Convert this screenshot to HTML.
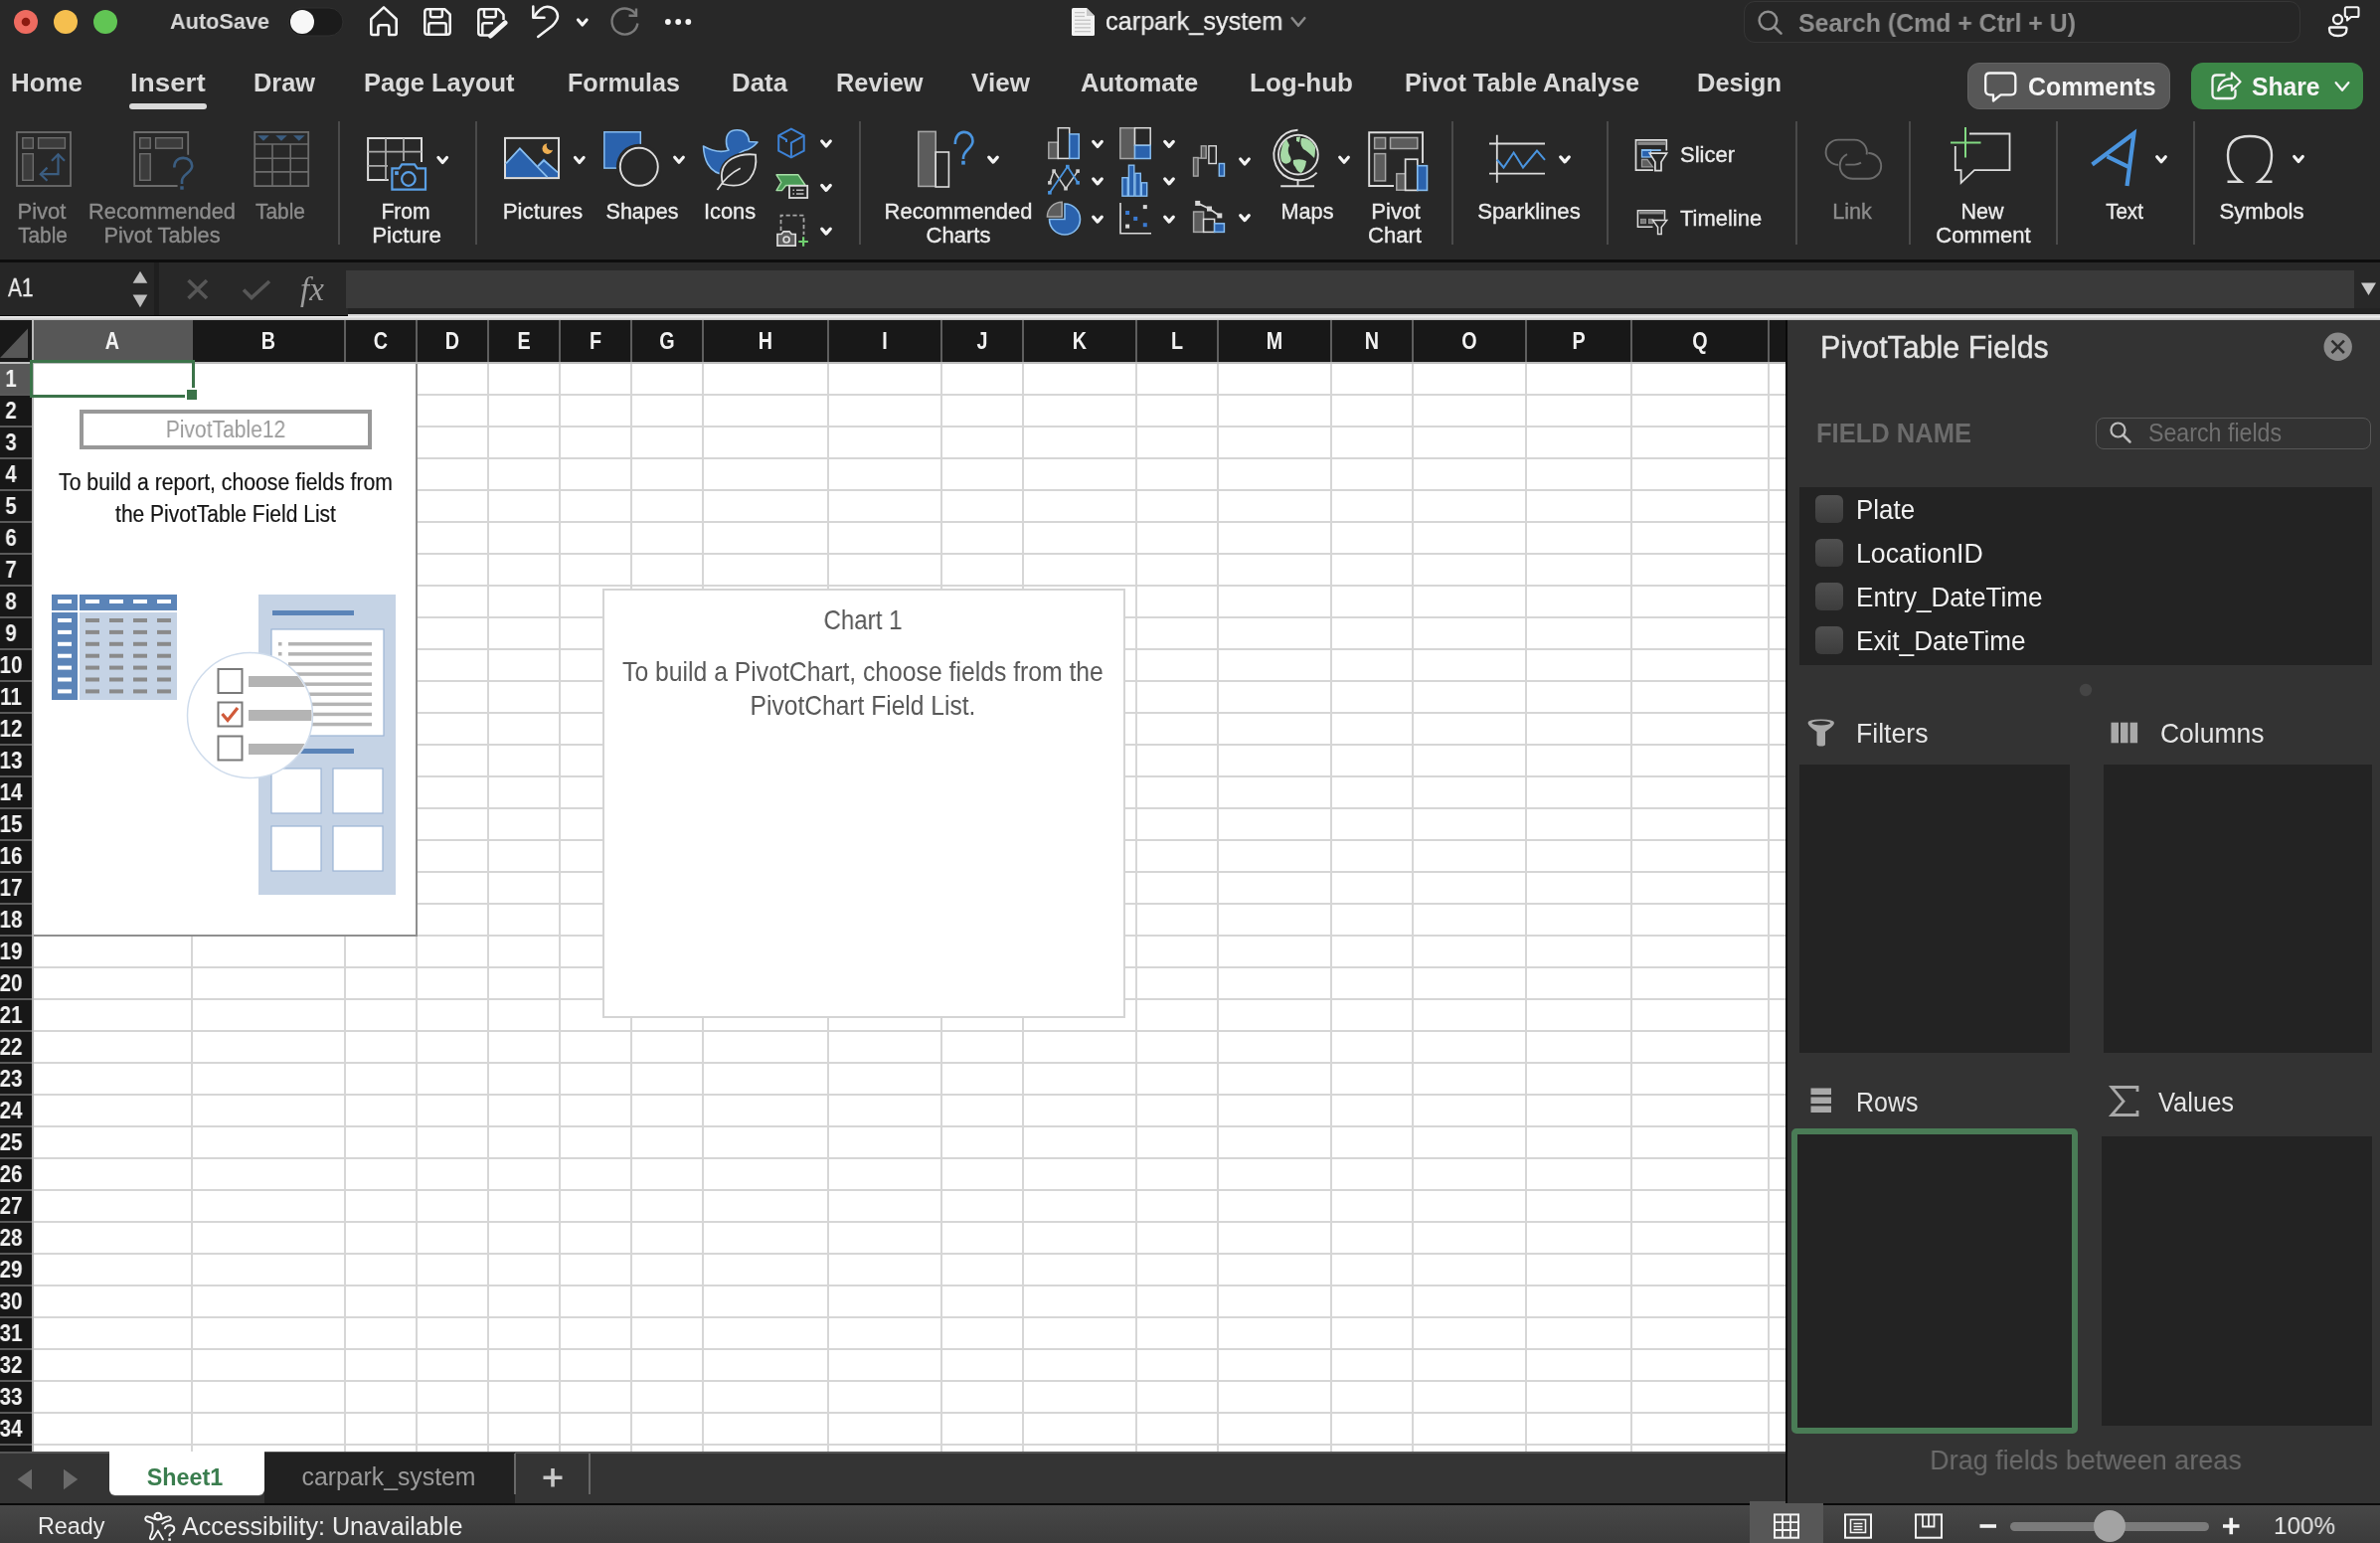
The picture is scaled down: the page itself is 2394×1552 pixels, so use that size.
<!DOCTYPE html>
<html><head><meta charset="utf-8"><title>Excel</title>
<style>html,body{margin:0;padding:0;}body{width:2394px;height:1552px;position:relative;overflow:hidden;background:#282828;font-family:"Liberation Sans",sans-serif;}</style>
</head><body><div style="position:absolute;left:0;top:0;width:2394px;height:1552px;will-change:transform;">
<div style="position:absolute;left:0px;top:0px;width:2394px;height:261px;background:#282828"></div><div style="position:absolute;left:0px;top:261px;width:2394px;height:3px;background:#0e0e0e"></div><div style="position:absolute;left:0px;top:264px;width:2394px;height:53px;background:#282828"></div><div style="position:absolute;left:0px;top:264px;width:155px;height:53px;background:#262626"></div><div style="position:absolute;left:155px;top:264px;width:5px;height:53px;background:#1f1f1f"></div><div style="position:absolute;left:348px;top:272px;width:2020px;height:38px;background:#3a3a3a"></div><div style="position:absolute;left:350px;top:310px;width:2044px;height:6px;background:#232323"></div><div style="position:absolute;left:0px;top:316.5px;width:350px;height:1.5px;background:#0a0a0a"></div><div style="position:absolute;left:350px;top:316px;width:2044px;height:2px;background:#d9d9d9"></div><div style="position:absolute;left:0px;top:318px;width:2394px;height:4px;background:linear-gradient(#f4f4f4,#c2c2c2)"></div><div style="position:absolute;left:0px;top:322px;width:1796px;height:42px;background:#181818"></div><div style="position:absolute;left:34px;top:322px;width:160px;height:42px;background:#575757"></div><div style="position:absolute;left:0px;top:364px;width:1796px;height:2px;background:#bdbdbd"></div><div style="position:absolute;left:0px;top:366px;width:32px;height:1094px;background:#171717"></div><div style="position:absolute;left:0px;top:366px;width:32px;height:30px;background:#575757"></div><div style="position:absolute;left:32px;top:322px;width:2px;height:1138px;background:#b8b8b8"></div><div style="position:absolute;left:34px;top:366px;width:1762px;height:1094px;background:#ffffff"></div><div style="position:absolute;left:34px;top:396px;width:1762px;height:2px;background:#d6d6d6"></div><div style="position:absolute;left:0px;top:396px;width:32px;height:2px;background:#5a5a5a"></div><div style="position:absolute;left:34px;top:428px;width:1762px;height:2px;background:#d6d6d6"></div><div style="position:absolute;left:0px;top:428px;width:32px;height:2px;background:#5a5a5a"></div><div style="position:absolute;left:34px;top:460px;width:1762px;height:2px;background:#d6d6d6"></div><div style="position:absolute;left:0px;top:460px;width:32px;height:2px;background:#5a5a5a"></div><div style="position:absolute;left:34px;top:492px;width:1762px;height:2px;background:#d6d6d6"></div><div style="position:absolute;left:0px;top:492px;width:32px;height:2px;background:#5a5a5a"></div><div style="position:absolute;left:34px;top:524px;width:1762px;height:2px;background:#d6d6d6"></div><div style="position:absolute;left:0px;top:524px;width:32px;height:2px;background:#5a5a5a"></div><div style="position:absolute;left:34px;top:556px;width:1762px;height:2px;background:#d6d6d6"></div><div style="position:absolute;left:0px;top:556px;width:32px;height:2px;background:#5a5a5a"></div><div style="position:absolute;left:34px;top:588px;width:1762px;height:2px;background:#d6d6d6"></div><div style="position:absolute;left:0px;top:588px;width:32px;height:2px;background:#5a5a5a"></div><div style="position:absolute;left:34px;top:620px;width:1762px;height:2px;background:#d6d6d6"></div><div style="position:absolute;left:0px;top:620px;width:32px;height:2px;background:#5a5a5a"></div><div style="position:absolute;left:34px;top:652px;width:1762px;height:2px;background:#d6d6d6"></div><div style="position:absolute;left:0px;top:652px;width:32px;height:2px;background:#5a5a5a"></div><div style="position:absolute;left:34px;top:684px;width:1762px;height:2px;background:#d6d6d6"></div><div style="position:absolute;left:0px;top:684px;width:32px;height:2px;background:#5a5a5a"></div><div style="position:absolute;left:34px;top:716px;width:1762px;height:2px;background:#d6d6d6"></div><div style="position:absolute;left:0px;top:716px;width:32px;height:2px;background:#5a5a5a"></div><div style="position:absolute;left:34px;top:748px;width:1762px;height:2px;background:#d6d6d6"></div><div style="position:absolute;left:0px;top:748px;width:32px;height:2px;background:#5a5a5a"></div><div style="position:absolute;left:34px;top:780px;width:1762px;height:2px;background:#d6d6d6"></div><div style="position:absolute;left:0px;top:780px;width:32px;height:2px;background:#5a5a5a"></div><div style="position:absolute;left:34px;top:812px;width:1762px;height:2px;background:#d6d6d6"></div><div style="position:absolute;left:0px;top:812px;width:32px;height:2px;background:#5a5a5a"></div><div style="position:absolute;left:34px;top:844px;width:1762px;height:2px;background:#d6d6d6"></div><div style="position:absolute;left:0px;top:844px;width:32px;height:2px;background:#5a5a5a"></div><div style="position:absolute;left:34px;top:876px;width:1762px;height:2px;background:#d6d6d6"></div><div style="position:absolute;left:0px;top:876px;width:32px;height:2px;background:#5a5a5a"></div><div style="position:absolute;left:34px;top:908px;width:1762px;height:2px;background:#d6d6d6"></div><div style="position:absolute;left:0px;top:908px;width:32px;height:2px;background:#5a5a5a"></div><div style="position:absolute;left:34px;top:940px;width:1762px;height:2px;background:#d6d6d6"></div><div style="position:absolute;left:0px;top:940px;width:32px;height:2px;background:#5a5a5a"></div><div style="position:absolute;left:34px;top:972px;width:1762px;height:2px;background:#d6d6d6"></div><div style="position:absolute;left:0px;top:972px;width:32px;height:2px;background:#5a5a5a"></div><div style="position:absolute;left:34px;top:1004px;width:1762px;height:2px;background:#d6d6d6"></div><div style="position:absolute;left:0px;top:1004px;width:32px;height:2px;background:#5a5a5a"></div><div style="position:absolute;left:34px;top:1036px;width:1762px;height:2px;background:#d6d6d6"></div><div style="position:absolute;left:0px;top:1036px;width:32px;height:2px;background:#5a5a5a"></div><div style="position:absolute;left:34px;top:1068px;width:1762px;height:2px;background:#d6d6d6"></div><div style="position:absolute;left:0px;top:1068px;width:32px;height:2px;background:#5a5a5a"></div><div style="position:absolute;left:34px;top:1100px;width:1762px;height:2px;background:#d6d6d6"></div><div style="position:absolute;left:0px;top:1100px;width:32px;height:2px;background:#5a5a5a"></div><div style="position:absolute;left:34px;top:1132px;width:1762px;height:2px;background:#d6d6d6"></div><div style="position:absolute;left:0px;top:1132px;width:32px;height:2px;background:#5a5a5a"></div><div style="position:absolute;left:34px;top:1164px;width:1762px;height:2px;background:#d6d6d6"></div><div style="position:absolute;left:0px;top:1164px;width:32px;height:2px;background:#5a5a5a"></div><div style="position:absolute;left:34px;top:1196px;width:1762px;height:2px;background:#d6d6d6"></div><div style="position:absolute;left:0px;top:1196px;width:32px;height:2px;background:#5a5a5a"></div><div style="position:absolute;left:34px;top:1228px;width:1762px;height:2px;background:#d6d6d6"></div><div style="position:absolute;left:0px;top:1228px;width:32px;height:2px;background:#5a5a5a"></div><div style="position:absolute;left:34px;top:1260px;width:1762px;height:2px;background:#d6d6d6"></div><div style="position:absolute;left:0px;top:1260px;width:32px;height:2px;background:#5a5a5a"></div><div style="position:absolute;left:34px;top:1292px;width:1762px;height:2px;background:#d6d6d6"></div><div style="position:absolute;left:0px;top:1292px;width:32px;height:2px;background:#5a5a5a"></div><div style="position:absolute;left:34px;top:1324px;width:1762px;height:2px;background:#d6d6d6"></div><div style="position:absolute;left:0px;top:1324px;width:32px;height:2px;background:#5a5a5a"></div><div style="position:absolute;left:34px;top:1356px;width:1762px;height:2px;background:#d6d6d6"></div><div style="position:absolute;left:0px;top:1356px;width:32px;height:2px;background:#5a5a5a"></div><div style="position:absolute;left:34px;top:1388px;width:1762px;height:2px;background:#d6d6d6"></div><div style="position:absolute;left:0px;top:1388px;width:32px;height:2px;background:#5a5a5a"></div><div style="position:absolute;left:34px;top:1420px;width:1762px;height:2px;background:#d6d6d6"></div><div style="position:absolute;left:0px;top:1420px;width:32px;height:2px;background:#5a5a5a"></div><div style="position:absolute;left:34px;top:1452px;width:1762px;height:2px;background:#d6d6d6"></div><div style="position:absolute;left:0px;top:1452px;width:32px;height:2px;background:#5a5a5a"></div><div style="position:absolute;left:192px;top:366px;width:2px;height:1094px;background:#d6d6d6"></div><div style="position:absolute;left:346px;top:366px;width:2px;height:1094px;background:#d6d6d6"></div><div style="position:absolute;left:346px;top:322px;width:2px;height:42px;background:#5e5e5e"></div><div style="position:absolute;left:418px;top:366px;width:2px;height:1094px;background:#d6d6d6"></div><div style="position:absolute;left:418px;top:322px;width:2px;height:42px;background:#5e5e5e"></div><div style="position:absolute;left:490px;top:366px;width:2px;height:1094px;background:#d6d6d6"></div><div style="position:absolute;left:490px;top:322px;width:2px;height:42px;background:#5e5e5e"></div><div style="position:absolute;left:562px;top:366px;width:2px;height:1094px;background:#d6d6d6"></div><div style="position:absolute;left:562px;top:322px;width:2px;height:42px;background:#5e5e5e"></div><div style="position:absolute;left:634px;top:366px;width:2px;height:1094px;background:#d6d6d6"></div><div style="position:absolute;left:634px;top:322px;width:2px;height:42px;background:#5e5e5e"></div><div style="position:absolute;left:706px;top:366px;width:2px;height:1094px;background:#d6d6d6"></div><div style="position:absolute;left:706px;top:322px;width:2px;height:42px;background:#5e5e5e"></div><div style="position:absolute;left:832px;top:366px;width:2px;height:1094px;background:#d6d6d6"></div><div style="position:absolute;left:832px;top:322px;width:2px;height:42px;background:#5e5e5e"></div><div style="position:absolute;left:946px;top:366px;width:2px;height:1094px;background:#d6d6d6"></div><div style="position:absolute;left:946px;top:322px;width:2px;height:42px;background:#5e5e5e"></div><div style="position:absolute;left:1028px;top:366px;width:2px;height:1094px;background:#d6d6d6"></div><div style="position:absolute;left:1028px;top:322px;width:2px;height:42px;background:#5e5e5e"></div><div style="position:absolute;left:1142px;top:366px;width:2px;height:1094px;background:#d6d6d6"></div><div style="position:absolute;left:1142px;top:322px;width:2px;height:42px;background:#5e5e5e"></div><div style="position:absolute;left:1224px;top:366px;width:2px;height:1094px;background:#d6d6d6"></div><div style="position:absolute;left:1224px;top:322px;width:2px;height:42px;background:#5e5e5e"></div><div style="position:absolute;left:1338px;top:366px;width:2px;height:1094px;background:#d6d6d6"></div><div style="position:absolute;left:1338px;top:322px;width:2px;height:42px;background:#5e5e5e"></div><div style="position:absolute;left:1420px;top:366px;width:2px;height:1094px;background:#d6d6d6"></div><div style="position:absolute;left:1420px;top:322px;width:2px;height:42px;background:#5e5e5e"></div><div style="position:absolute;left:1534px;top:366px;width:2px;height:1094px;background:#d6d6d6"></div><div style="position:absolute;left:1534px;top:322px;width:2px;height:42px;background:#5e5e5e"></div><div style="position:absolute;left:1640px;top:366px;width:2px;height:1094px;background:#d6d6d6"></div><div style="position:absolute;left:1640px;top:322px;width:2px;height:42px;background:#5e5e5e"></div><div style="position:absolute;left:1778px;top:366px;width:2px;height:1094px;background:#d6d6d6"></div><div style="position:absolute;left:1778px;top:322px;width:2px;height:42px;background:#5e5e5e"></div><div style="position:absolute;left:-887.0px;width:2000px;text-align:center;top:332.41px;font-size:23.5px;line-height:23.5px;color:#f2f2f2;font-weight:700;white-space:nowrap;font-family:'Liberation Sans', sans-serif;transform:scaleX(0.84);transform-origin:50% 0;">A</div><div style="position:absolute;left:-730.0px;width:2000px;text-align:center;top:332.41px;font-size:23.5px;line-height:23.5px;color:#f2f2f2;font-weight:700;white-space:nowrap;font-family:'Liberation Sans', sans-serif;transform:scaleX(0.84);transform-origin:50% 0;">B</div><div style="position:absolute;left:-617.0px;width:2000px;text-align:center;top:332.41px;font-size:23.5px;line-height:23.5px;color:#f2f2f2;font-weight:700;white-space:nowrap;font-family:'Liberation Sans', sans-serif;transform:scaleX(0.84);transform-origin:50% 0;">C</div><div style="position:absolute;left:-545.0px;width:2000px;text-align:center;top:332.41px;font-size:23.5px;line-height:23.5px;color:#f2f2f2;font-weight:700;white-space:nowrap;font-family:'Liberation Sans', sans-serif;transform:scaleX(0.84);transform-origin:50% 0;">D</div><div style="position:absolute;left:-473.0px;width:2000px;text-align:center;top:332.41px;font-size:23.5px;line-height:23.5px;color:#f2f2f2;font-weight:700;white-space:nowrap;font-family:'Liberation Sans', sans-serif;transform:scaleX(0.84);transform-origin:50% 0;">E</div><div style="position:absolute;left:-401.0px;width:2000px;text-align:center;top:332.41px;font-size:23.5px;line-height:23.5px;color:#f2f2f2;font-weight:700;white-space:nowrap;font-family:'Liberation Sans', sans-serif;transform:scaleX(0.84);transform-origin:50% 0;">F</div><div style="position:absolute;left:-329.0px;width:2000px;text-align:center;top:332.41px;font-size:23.5px;line-height:23.5px;color:#f2f2f2;font-weight:700;white-space:nowrap;font-family:'Liberation Sans', sans-serif;transform:scaleX(0.84);transform-origin:50% 0;">G</div><div style="position:absolute;left:-230.0px;width:2000px;text-align:center;top:332.41px;font-size:23.5px;line-height:23.5px;color:#f2f2f2;font-weight:700;white-space:nowrap;font-family:'Liberation Sans', sans-serif;transform:scaleX(0.84);transform-origin:50% 0;">H</div><div style="position:absolute;left:-110.0px;width:2000px;text-align:center;top:332.41px;font-size:23.5px;line-height:23.5px;color:#f2f2f2;font-weight:700;white-space:nowrap;font-family:'Liberation Sans', sans-serif;transform:scaleX(0.84);transform-origin:50% 0;">I</div><div style="position:absolute;left:-12.0px;width:2000px;text-align:center;top:332.41px;font-size:23.5px;line-height:23.5px;color:#f2f2f2;font-weight:700;white-space:nowrap;font-family:'Liberation Sans', sans-serif;transform:scaleX(0.84);transform-origin:50% 0;">J</div><div style="position:absolute;left:86.0px;width:2000px;text-align:center;top:332.41px;font-size:23.5px;line-height:23.5px;color:#f2f2f2;font-weight:700;white-space:nowrap;font-family:'Liberation Sans', sans-serif;transform:scaleX(0.84);transform-origin:50% 0;">K</div><div style="position:absolute;left:184.0px;width:2000px;text-align:center;top:332.41px;font-size:23.5px;line-height:23.5px;color:#f2f2f2;font-weight:700;white-space:nowrap;font-family:'Liberation Sans', sans-serif;transform:scaleX(0.84);transform-origin:50% 0;">L</div><div style="position:absolute;left:282.0px;width:2000px;text-align:center;top:332.41px;font-size:23.5px;line-height:23.5px;color:#f2f2f2;font-weight:700;white-space:nowrap;font-family:'Liberation Sans', sans-serif;transform:scaleX(0.84);transform-origin:50% 0;">M</div><div style="position:absolute;left:380.0px;width:2000px;text-align:center;top:332.41px;font-size:23.5px;line-height:23.5px;color:#f2f2f2;font-weight:700;white-space:nowrap;font-family:'Liberation Sans', sans-serif;transform:scaleX(0.84);transform-origin:50% 0;">N</div><div style="position:absolute;left:478.0px;width:2000px;text-align:center;top:332.41px;font-size:23.5px;line-height:23.5px;color:#f2f2f2;font-weight:700;white-space:nowrap;font-family:'Liberation Sans', sans-serif;transform:scaleX(0.84);transform-origin:50% 0;">O</div><div style="position:absolute;left:588.0px;width:2000px;text-align:center;top:332.41px;font-size:23.5px;line-height:23.5px;color:#f2f2f2;font-weight:700;white-space:nowrap;font-family:'Liberation Sans', sans-serif;transform:scaleX(0.84);transform-origin:50% 0;">P</div><div style="position:absolute;left:710.0px;width:2000px;text-align:center;top:332.41px;font-size:23.5px;line-height:23.5px;color:#f2f2f2;font-weight:700;white-space:nowrap;font-family:'Liberation Sans', sans-serif;transform:scaleX(0.84);transform-origin:50% 0;">Q</div><div style="position:absolute;left:-989.4px;width:2000px;text-align:center;top:370.11px;font-size:23.5px;line-height:23.5px;color:#f2f2f2;font-weight:700;white-space:nowrap;font-family:'Liberation Sans', sans-serif;transform:scaleX(0.88);transform-origin:50% 0;">1</div><div style="position:absolute;left:-989.4px;width:2000px;text-align:center;top:402.11px;font-size:23.5px;line-height:23.5px;color:#f2f2f2;font-weight:700;white-space:nowrap;font-family:'Liberation Sans', sans-serif;transform:scaleX(0.88);transform-origin:50% 0;">2</div><div style="position:absolute;left:-989.4px;width:2000px;text-align:center;top:434.11px;font-size:23.5px;line-height:23.5px;color:#f2f2f2;font-weight:700;white-space:nowrap;font-family:'Liberation Sans', sans-serif;transform:scaleX(0.88);transform-origin:50% 0;">3</div><div style="position:absolute;left:-989.4px;width:2000px;text-align:center;top:466.11px;font-size:23.5px;line-height:23.5px;color:#f2f2f2;font-weight:700;white-space:nowrap;font-family:'Liberation Sans', sans-serif;transform:scaleX(0.88);transform-origin:50% 0;">4</div><div style="position:absolute;left:-989.4px;width:2000px;text-align:center;top:498.11px;font-size:23.5px;line-height:23.5px;color:#f2f2f2;font-weight:700;white-space:nowrap;font-family:'Liberation Sans', sans-serif;transform:scaleX(0.88);transform-origin:50% 0;">5</div><div style="position:absolute;left:-989.4px;width:2000px;text-align:center;top:530.11px;font-size:23.5px;line-height:23.5px;color:#f2f2f2;font-weight:700;white-space:nowrap;font-family:'Liberation Sans', sans-serif;transform:scaleX(0.88);transform-origin:50% 0;">6</div><div style="position:absolute;left:-989.4px;width:2000px;text-align:center;top:562.11px;font-size:23.5px;line-height:23.5px;color:#f2f2f2;font-weight:700;white-space:nowrap;font-family:'Liberation Sans', sans-serif;transform:scaleX(0.88);transform-origin:50% 0;">7</div><div style="position:absolute;left:-989.4px;width:2000px;text-align:center;top:594.11px;font-size:23.5px;line-height:23.5px;color:#f2f2f2;font-weight:700;white-space:nowrap;font-family:'Liberation Sans', sans-serif;transform:scaleX(0.88);transform-origin:50% 0;">8</div><div style="position:absolute;left:-989.4px;width:2000px;text-align:center;top:626.11px;font-size:23.5px;line-height:23.5px;color:#f2f2f2;font-weight:700;white-space:nowrap;font-family:'Liberation Sans', sans-serif;transform:scaleX(0.88);transform-origin:50% 0;">9</div><div style="position:absolute;left:-989.4px;width:2000px;text-align:center;top:658.11px;font-size:23.5px;line-height:23.5px;color:#f2f2f2;font-weight:700;white-space:nowrap;font-family:'Liberation Sans', sans-serif;transform:scaleX(0.88);transform-origin:50% 0;">10</div><div style="position:absolute;left:-989.4px;width:2000px;text-align:center;top:690.11px;font-size:23.5px;line-height:23.5px;color:#f2f2f2;font-weight:700;white-space:nowrap;font-family:'Liberation Sans', sans-serif;transform:scaleX(0.88);transform-origin:50% 0;">11</div><div style="position:absolute;left:-989.4px;width:2000px;text-align:center;top:722.11px;font-size:23.5px;line-height:23.5px;color:#f2f2f2;font-weight:700;white-space:nowrap;font-family:'Liberation Sans', sans-serif;transform:scaleX(0.88);transform-origin:50% 0;">12</div><div style="position:absolute;left:-989.4px;width:2000px;text-align:center;top:754.11px;font-size:23.5px;line-height:23.5px;color:#f2f2f2;font-weight:700;white-space:nowrap;font-family:'Liberation Sans', sans-serif;transform:scaleX(0.88);transform-origin:50% 0;">13</div><div style="position:absolute;left:-989.4px;width:2000px;text-align:center;top:786.11px;font-size:23.5px;line-height:23.5px;color:#f2f2f2;font-weight:700;white-space:nowrap;font-family:'Liberation Sans', sans-serif;transform:scaleX(0.88);transform-origin:50% 0;">14</div><div style="position:absolute;left:-989.4px;width:2000px;text-align:center;top:818.11px;font-size:23.5px;line-height:23.5px;color:#f2f2f2;font-weight:700;white-space:nowrap;font-family:'Liberation Sans', sans-serif;transform:scaleX(0.88);transform-origin:50% 0;">15</div><div style="position:absolute;left:-989.4px;width:2000px;text-align:center;top:850.11px;font-size:23.5px;line-height:23.5px;color:#f2f2f2;font-weight:700;white-space:nowrap;font-family:'Liberation Sans', sans-serif;transform:scaleX(0.88);transform-origin:50% 0;">16</div><div style="position:absolute;left:-989.4px;width:2000px;text-align:center;top:882.11px;font-size:23.5px;line-height:23.5px;color:#f2f2f2;font-weight:700;white-space:nowrap;font-family:'Liberation Sans', sans-serif;transform:scaleX(0.88);transform-origin:50% 0;">17</div><div style="position:absolute;left:-989.4px;width:2000px;text-align:center;top:914.11px;font-size:23.5px;line-height:23.5px;color:#f2f2f2;font-weight:700;white-space:nowrap;font-family:'Liberation Sans', sans-serif;transform:scaleX(0.88);transform-origin:50% 0;">18</div><div style="position:absolute;left:-989.4px;width:2000px;text-align:center;top:946.11px;font-size:23.5px;line-height:23.5px;color:#f2f2f2;font-weight:700;white-space:nowrap;font-family:'Liberation Sans', sans-serif;transform:scaleX(0.88);transform-origin:50% 0;">19</div><div style="position:absolute;left:-989.4px;width:2000px;text-align:center;top:978.11px;font-size:23.5px;line-height:23.5px;color:#f2f2f2;font-weight:700;white-space:nowrap;font-family:'Liberation Sans', sans-serif;transform:scaleX(0.88);transform-origin:50% 0;">20</div><div style="position:absolute;left:-989.4px;width:2000px;text-align:center;top:1010.11px;font-size:23.5px;line-height:23.5px;color:#f2f2f2;font-weight:700;white-space:nowrap;font-family:'Liberation Sans', sans-serif;transform:scaleX(0.88);transform-origin:50% 0;">21</div><div style="position:absolute;left:-989.4px;width:2000px;text-align:center;top:1042.11px;font-size:23.5px;line-height:23.5px;color:#f2f2f2;font-weight:700;white-space:nowrap;font-family:'Liberation Sans', sans-serif;transform:scaleX(0.88);transform-origin:50% 0;">22</div><div style="position:absolute;left:-989.4px;width:2000px;text-align:center;top:1074.11px;font-size:23.5px;line-height:23.5px;color:#f2f2f2;font-weight:700;white-space:nowrap;font-family:'Liberation Sans', sans-serif;transform:scaleX(0.88);transform-origin:50% 0;">23</div><div style="position:absolute;left:-989.4px;width:2000px;text-align:center;top:1106.11px;font-size:23.5px;line-height:23.5px;color:#f2f2f2;font-weight:700;white-space:nowrap;font-family:'Liberation Sans', sans-serif;transform:scaleX(0.88);transform-origin:50% 0;">24</div><div style="position:absolute;left:-989.4px;width:2000px;text-align:center;top:1138.11px;font-size:23.5px;line-height:23.5px;color:#f2f2f2;font-weight:700;white-space:nowrap;font-family:'Liberation Sans', sans-serif;transform:scaleX(0.88);transform-origin:50% 0;">25</div><div style="position:absolute;left:-989.4px;width:2000px;text-align:center;top:1170.11px;font-size:23.5px;line-height:23.5px;color:#f2f2f2;font-weight:700;white-space:nowrap;font-family:'Liberation Sans', sans-serif;transform:scaleX(0.88);transform-origin:50% 0;">26</div><div style="position:absolute;left:-989.4px;width:2000px;text-align:center;top:1202.11px;font-size:23.5px;line-height:23.5px;color:#f2f2f2;font-weight:700;white-space:nowrap;font-family:'Liberation Sans', sans-serif;transform:scaleX(0.88);transform-origin:50% 0;">27</div><div style="position:absolute;left:-989.4px;width:2000px;text-align:center;top:1234.11px;font-size:23.5px;line-height:23.5px;color:#f2f2f2;font-weight:700;white-space:nowrap;font-family:'Liberation Sans', sans-serif;transform:scaleX(0.88);transform-origin:50% 0;">28</div><div style="position:absolute;left:-989.4px;width:2000px;text-align:center;top:1266.11px;font-size:23.5px;line-height:23.5px;color:#f2f2f2;font-weight:700;white-space:nowrap;font-family:'Liberation Sans', sans-serif;transform:scaleX(0.88);transform-origin:50% 0;">29</div><div style="position:absolute;left:-989.4px;width:2000px;text-align:center;top:1298.11px;font-size:23.5px;line-height:23.5px;color:#f2f2f2;font-weight:700;white-space:nowrap;font-family:'Liberation Sans', sans-serif;transform:scaleX(0.88);transform-origin:50% 0;">30</div><div style="position:absolute;left:-989.4px;width:2000px;text-align:center;top:1330.11px;font-size:23.5px;line-height:23.5px;color:#f2f2f2;font-weight:700;white-space:nowrap;font-family:'Liberation Sans', sans-serif;transform:scaleX(0.88);transform-origin:50% 0;">31</div><div style="position:absolute;left:-989.4px;width:2000px;text-align:center;top:1362.11px;font-size:23.5px;line-height:23.5px;color:#f2f2f2;font-weight:700;white-space:nowrap;font-family:'Liberation Sans', sans-serif;transform:scaleX(0.88);transform-origin:50% 0;">32</div><div style="position:absolute;left:-989.4px;width:2000px;text-align:center;top:1394.11px;font-size:23.5px;line-height:23.5px;color:#f2f2f2;font-weight:700;white-space:nowrap;font-family:'Liberation Sans', sans-serif;transform:scaleX(0.88);transform-origin:50% 0;">33</div><div style="position:absolute;left:-989.4px;width:2000px;text-align:center;top:1426.11px;font-size:23.5px;line-height:23.5px;color:#f2f2f2;font-weight:700;white-space:nowrap;font-family:'Liberation Sans', sans-serif;transform:scaleX(0.88);transform-origin:50% 0;">34</div><div style="position:absolute;left:34px;top:366px;width:384px;height:574px;background:#fff"></div><div style="position:absolute;left:418px;top:366px;width:2px;height:576px;background:#8f8f8f"></div><div style="position:absolute;left:34px;top:940px;width:386px;height:2px;background:#8f8f8f"></div><div style="position:absolute;left:80px;top:412px;width:294px;height:40px;box-sizing:border-box;border:4px solid #989898;background:#fff"></div><div style="position:absolute;left:-773px;width:2000px;text-align:center;top:420.83px;font-size:23px;line-height:23px;color:#9a9a9a;font-weight:400;white-space:nowrap;font-family:'Liberation Sans', sans-serif;transform:scaleX(0.9155);transform-origin:50% 0;">PivotTable12</div><div style="position:absolute;left:-773.1px;width:2000px;text-align:center;top:474.33px;font-size:23px;line-height:23px;color:#141414;font-weight:400;white-space:nowrap;font-family:'Liberation Sans', sans-serif;transform:scaleX(0.9218);transform-origin:50% 0;-webkit-text-stroke:0.2px #141414;">To build a report, choose fields from</div><div style="position:absolute;left:-773.4px;width:2000px;text-align:center;top:505.83px;font-size:23px;line-height:23px;color:#141414;font-weight:400;white-space:nowrap;font-family:'Liberation Sans', sans-serif;transform:scaleX(0.9134);transform-origin:50% 0;-webkit-text-stroke:0.2px #141414;">the PivotTable Field List</div><div style="position:absolute;left:606px;top:592px;width:526px;height:432px;box-sizing:border-box;border:2px solid #d4d4d4;background:#fff"></div><div style="position:absolute;left:-132.29999999999995px;width:2000px;text-align:center;top:610.12px;font-size:27.5px;line-height:27.5px;color:#595959;font-weight:400;white-space:nowrap;font-family:'Liberation Sans', sans-serif;transform:scaleX(0.8782);transform-origin:50% 0;">Chart 1</div><div style="position:absolute;left:-131.79999999999995px;width:2000px;text-align:center;top:662.42px;font-size:27.5px;line-height:27.5px;color:#595959;font-weight:400;white-space:nowrap;font-family:'Liberation Sans', sans-serif;transform:scaleX(0.8991);transform-origin:50% 0;">To build a PivotChart, choose fields from the</div><div style="position:absolute;left:-132px;width:2000px;text-align:center;top:696.02px;font-size:27.5px;line-height:27.5px;color:#595959;font-weight:400;white-space:nowrap;font-family:'Liberation Sans', sans-serif;transform:scaleX(0.8944);transform-origin:50% 0;">PivotChart Field List.</div><div style="position:absolute;left:30px;top:362px;width:166px;height:38px;box-sizing:border-box;border:3.7px solid #3b7349"></div><div style="position:absolute;left:186px;top:390px;width:14px;height:14px;background:#fff"></div><div style="position:absolute;left:188px;top:392px;width:10px;height:10px;background:#3b7349"></div><div style="position:absolute;left:0px;top:1460px;width:1796px;height:52px;background:#343434"></div><div style="position:absolute;left:0px;top:1460px;width:1796px;height:2px;background:#565656"></div><div style="position:absolute;left:266px;top:1461px;width:252px;height:51px;background:#212121"></div><div style="position:absolute;left:517px;top:1462px;width:2px;height:41px;background:#686868"></div><div style="position:absolute;left:592px;top:1462px;width:2px;height:41px;background:#686868"></div><div style="position:absolute;left:110px;top:1460px;width:156px;height:44px;background:#fff;border-radius:0 0 6px 6px;box-shadow:0 1px 0 #555"></div><div style="position:absolute;left:-813.6px;width:2000px;text-align:center;top:1473.88px;font-size:24px;line-height:24px;color:#3a7d4e;font-weight:700;white-space:nowrap;font-family:'Liberation Sans', sans-serif;transform:scaleX(0.972);transform-origin:50% 0;">Sheet1</div><div style="position:absolute;left:-608.6px;width:2000px;text-align:center;top:1473.04px;font-size:25px;line-height:25px;color:#9a9a9a;font-weight:400;white-space:nowrap;font-family:'Liberation Sans', sans-serif;transform:scaleX(0.9918);transform-origin:50% 0;">carpark_system</div><div style="position:absolute;left:0px;top:1512px;width:2394px;height:1.5px;background:#0a0a0a"></div><div style="position:absolute;left:0px;top:1514px;width:2394px;height:38px;background:linear-gradient(#474747,#3b3b3b)"></div><div style="position:absolute;left:1760px;top:1510px;width:74px;height:42px;background:#575757"></div><div style="position:absolute;left:37.8px;top:1523.26px;font-size:24.5px;line-height:24.5px;color:#ececec;font-weight:400;white-space:nowrap;font-family:'Liberation Sans', sans-serif;transform:scaleX(0.9531);transform-origin:0 0;">Ready</div><div style="position:absolute;left:183.4px;top:1522.84px;font-size:25px;line-height:25px;color:#ececec;font-weight:400;white-space:nowrap;font-family:'Liberation Sans', sans-serif;transform:scaleX(1.0061);transform-origin:0 0;">Accessibility: Unavailable</div><div style="position:absolute;left:2286.8px;top:1522.86px;font-size:24.5px;line-height:24.5px;color:#ececec;font-weight:400;white-space:nowrap;font-family:'Liberation Sans', sans-serif;transform:scaleX(0.9878);transform-origin:0 0;">100%</div><div style="position:absolute;left:1796px;top:322px;width:598px;height:1190px;background:#333333"></div><div style="position:absolute;left:1796px;top:322px;width:2px;height:1190px;background:#0a0a0a"></div><div style="position:absolute;left:1831px;top:332.91px;font-size:32px;line-height:32px;color:#e6e6e6;font-weight:400;white-space:nowrap;font-family:'Liberation Sans', sans-serif;transform:scaleX(0.9501);transform-origin:0 0;-webkit-text-stroke:0.35px #e6e6e6;">PivotTable Fields</div><div style="position:absolute;left:1827.4px;top:421.72px;font-size:27.5px;line-height:27.5px;color:#6b6b6b;font-weight:700;white-space:nowrap;font-family:'Liberation Sans', sans-serif;transform:scaleX(0.9283);transform-origin:0 0;">FIELD NAME</div><div style="position:absolute;left:2108px;top:420px;width:277px;height:32px;box-sizing:border-box;border:1.5px solid #575757;border-radius:8px;background:#333"></div><div style="position:absolute;left:2160.7px;top:422.84px;font-size:25px;line-height:25px;color:#707070;font-weight:400;white-space:nowrap;font-family:'Liberation Sans', sans-serif;transform:scaleX(0.9279);transform-origin:0 0;">Search fields</div><div style="position:absolute;left:1810px;top:490px;width:576px;height:179px;background:#232323"></div><div style="position:absolute;left:1826px;top:498px;width:28px;height:28px;border-radius:6px;background:linear-gradient(#505050,#3c3c3c)"></div><div style="position:absolute;left:1866.6px;top:498.72px;font-size:27.5px;line-height:27.5px;color:#f2f2f2;font-weight:400;white-space:nowrap;font-family:'Liberation Sans', sans-serif;transform:scaleX(0.9429);transform-origin:0 0;">Plate</div><div style="position:absolute;left:1826px;top:542px;width:28px;height:28px;border-radius:6px;background:linear-gradient(#505050,#3c3c3c)"></div><div style="position:absolute;left:1866.6px;top:542.72px;font-size:27.5px;line-height:27.5px;color:#f2f2f2;font-weight:400;white-space:nowrap;font-family:'Liberation Sans', sans-serif;transform:scaleX(0.9713);transform-origin:0 0;">LocationID</div><div style="position:absolute;left:1826px;top:586px;width:28px;height:28px;border-radius:6px;background:linear-gradient(#505050,#3c3c3c)"></div><div style="position:absolute;left:1866.6px;top:586.72px;font-size:27.5px;line-height:27.5px;color:#f2f2f2;font-weight:400;white-space:nowrap;font-family:'Liberation Sans', sans-serif;transform:scaleX(0.9493);transform-origin:0 0;">Entry_DateTime</div><div style="position:absolute;left:1826px;top:630px;width:28px;height:28px;border-radius:6px;background:linear-gradient(#505050,#3c3c3c)"></div><div style="position:absolute;left:1866.6px;top:630.72px;font-size:27.5px;line-height:27.5px;color:#f2f2f2;font-weight:400;white-space:nowrap;font-family:'Liberation Sans', sans-serif;transform:scaleX(0.9516);transform-origin:0 0;">Exit_DateTime</div><div style="position:absolute;left:1866.7px;top:723.52px;font-size:27.5px;line-height:27.5px;color:#e6e6e6;font-weight:400;white-space:nowrap;font-family:'Liberation Sans', sans-serif;transform:scaleX(0.9685);transform-origin:0 0;">Filters</div><div style="position:absolute;left:2172.5px;top:723.52px;font-size:27.5px;line-height:27.5px;color:#e6e6e6;font-weight:400;white-space:nowrap;font-family:'Liberation Sans', sans-serif;transform:scaleX(0.963);transform-origin:0 0;">Columns</div><div style="position:absolute;left:1810px;top:769px;width:272px;height:290px;background:#232323"></div><div style="position:absolute;left:2116px;top:769px;width:270px;height:290px;background:#232323"></div><div style="position:absolute;left:1867px;top:1094.72px;font-size:27.5px;line-height:27.5px;color:#e6e6e6;font-weight:400;white-space:nowrap;font-family:'Liberation Sans', sans-serif;transform:scaleX(0.9075);transform-origin:0 0;">Rows</div><div style="position:absolute;left:2170.7px;top:1094.72px;font-size:27.5px;line-height:27.5px;color:#e6e6e6;font-weight:400;white-space:nowrap;font-family:'Liberation Sans', sans-serif;transform:scaleX(0.9276);transform-origin:0 0;">Values</div><div style="position:absolute;left:1802px;top:1135px;width:288px;height:307px;box-sizing:border-box;border:6.5px solid #4a7c56;border-radius:5px;background:#232323"></div><div style="position:absolute;left:2114px;top:1143px;width:272px;height:291px;background:#232323"></div><div style="position:absolute;left:1098px;width:2000px;text-align:center;top:1455.10px;font-size:28px;line-height:28px;color:#6b6b6b;font-weight:400;white-space:nowrap;font-family:'Liberation Sans', sans-serif;transform:scaleX(0.964);transform-origin:50% 0;">Drag fields between areas</div><div style="position:absolute;left:170.6px;top:10.75px;font-size:22.5px;line-height:22.5px;color:#d9d9d9;font-weight:700;white-space:nowrap;font-family:'Liberation Sans', sans-serif;transform:scaleX(0.9636);transform-origin:0 0;">AutoSave</div><div style="position:absolute;left:1111.7px;top:9.31px;font-size:25.5px;line-height:25.5px;color:#f0f0f0;font-weight:400;white-space:nowrap;font-family:'Liberation Sans', sans-serif;transform:scaleX(0.9907);transform-origin:0 0;-webkit-text-stroke:0.25px #f0f0f0;">carpark_system</div><div style="position:absolute;left:1754px;top:1px;width:560px;height:42px;box-sizing:border-box;border:1.5px solid #363636;border-radius:11px;background:#262626"></div><div style="position:absolute;left:1808.7px;top:11.41px;font-size:25.5px;line-height:25.5px;color:#8f8f8f;font-weight:700;white-space:nowrap;font-family:'Liberation Sans', sans-serif;transform:scaleX(0.9747);transform-origin:0 0;">Search (Cmd + Ctrl + U)</div><div style="position:absolute;left:11px;top:69.67px;font-size:26.5px;line-height:26.5px;color:#dadada;font-weight:700;white-space:nowrap;font-family:'Liberation Sans', sans-serif;transform:scaleX(0.9779);transform-origin:0 0;">Home</div><div style="position:absolute;left:131px;top:69.67px;font-size:26.5px;line-height:26.5px;color:#dadada;font-weight:700;white-space:nowrap;font-family:'Liberation Sans', sans-serif;transform:scaleX(1.049);transform-origin:0 0;">Insert</div><div style="position:absolute;left:255px;top:69.67px;font-size:26.5px;line-height:26.5px;color:#dadada;font-weight:700;white-space:nowrap;font-family:'Liberation Sans', sans-serif;transform:scaleX(0.9568);transform-origin:0 0;">Draw</div><div style="position:absolute;left:366px;top:69.67px;font-size:26.5px;line-height:26.5px;color:#dadada;font-weight:700;white-space:nowrap;font-family:'Liberation Sans', sans-serif;transform:scaleX(0.9622);transform-origin:0 0;">Page Layout</div><div style="position:absolute;left:571px;top:69.67px;font-size:26.5px;line-height:26.5px;color:#dadada;font-weight:700;white-space:nowrap;font-family:'Liberation Sans', sans-serif;transform:scaleX(0.9474);transform-origin:0 0;">Formulas</div><div style="position:absolute;left:736px;top:69.67px;font-size:26.5px;line-height:26.5px;color:#dadada;font-weight:700;white-space:nowrap;font-family:'Liberation Sans', sans-serif;transform:scaleX(0.975);transform-origin:0 0;">Data</div><div style="position:absolute;left:840.5px;top:69.67px;font-size:26.5px;line-height:26.5px;color:#dadada;font-weight:700;white-space:nowrap;font-family:'Liberation Sans', sans-serif;transform:scaleX(0.9581);transform-origin:0 0;">Review</div><div style="position:absolute;left:976.6px;top:69.67px;font-size:26.5px;line-height:26.5px;color:#dadada;font-weight:700;white-space:nowrap;font-family:'Liberation Sans', sans-serif;transform:scaleX(0.9836);transform-origin:0 0;">View</div><div style="position:absolute;left:1086.6px;top:69.67px;font-size:26.5px;line-height:26.5px;color:#dadada;font-weight:700;white-space:nowrap;font-family:'Liberation Sans', sans-serif;transform:scaleX(0.9689);transform-origin:0 0;">Automate</div><div style="position:absolute;left:1256.6px;top:69.67px;font-size:26.5px;line-height:26.5px;color:#dadada;font-weight:700;white-space:nowrap;font-family:'Liberation Sans', sans-serif;transform:scaleX(0.9816);transform-origin:0 0;">Log-hub</div><div style="position:absolute;left:1413px;top:69.67px;font-size:26.5px;line-height:26.5px;color:#dadada;font-weight:700;white-space:nowrap;font-family:'Liberation Sans', sans-serif;transform:scaleX(0.9538);transform-origin:0 0;">Pivot Table Analyse</div><div style="position:absolute;left:1706.5px;top:69.67px;font-size:26.5px;line-height:26.5px;color:#dadada;font-weight:700;white-space:nowrap;font-family:'Liberation Sans', sans-serif;transform:scaleX(0.9621);transform-origin:0 0;">Design</div><div style="position:absolute;left:130px;top:104px;width:78px;height:6px;background:#d9d9d9;border-radius:3px"></div><div style="position:absolute;left:1978.5px;top:62.6px;width:204.7px;height:47.4px;box-sizing:border-box;background:#575757;border:1.5px solid #636363;border-radius:12px"></div><div style="position:absolute;left:2039.5px;top:74.61px;font-size:25.5px;line-height:25.5px;color:#f5f5f5;font-weight:700;white-space:nowrap;font-family:'Liberation Sans', sans-serif;transform:scaleX(0.9752);transform-origin:0 0;">Comments</div><div style="position:absolute;left:2204.4px;top:62.6px;width:173.1px;height:47.4px;background:#3c8747;border-radius:12px"></div><div style="position:absolute;left:2265px;top:74.61px;font-size:25.5px;line-height:25.5px;color:#f5f5f5;font-weight:700;white-space:nowrap;font-family:'Liberation Sans', sans-serif;transform:scaleX(0.9679);transform-origin:0 0;">Share</div><div style="position:absolute;left:-957.6px;width:2000px;text-align:center;top:201.68px;font-size:22px;line-height:22px;color:#8c8c8c;font-weight:400;white-space:nowrap;font-family:'Liberation Sans', sans-serif;transform:scaleX(1.0019);transform-origin:50% 0;-webkit-text-stroke:0.35px #8c8c8c;">Pivot</div><div style="position:absolute;left:-956.8px;width:2000px;text-align:center;top:225.68px;font-size:22px;line-height:22px;color:#8c8c8c;font-weight:400;white-space:nowrap;font-family:'Liberation Sans', sans-serif;transform:scaleX(0.9449);transform-origin:50% 0;-webkit-text-stroke:0.35px #8c8c8c;">Table</div><div style="position:absolute;left:-837px;width:2000px;text-align:center;top:201.68px;font-size:22px;line-height:22px;color:#8c8c8c;font-weight:400;white-space:nowrap;font-family:'Liberation Sans', sans-serif;transform:scaleX(0.992);transform-origin:50% 0;-webkit-text-stroke:0.35px #8c8c8c;">Recommended</div><div style="position:absolute;left:-837px;width:2000px;text-align:center;top:225.68px;font-size:22px;line-height:22px;color:#8c8c8c;font-weight:400;white-space:nowrap;font-family:'Liberation Sans', sans-serif;transform:scaleX(0.9913);transform-origin:50% 0;-webkit-text-stroke:0.35px #8c8c8c;">Pivot Tables</div><div style="position:absolute;left:-718.2px;width:2000px;text-align:center;top:201.68px;font-size:22px;line-height:22px;color:#8c8c8c;font-weight:400;white-space:nowrap;font-family:'Liberation Sans', sans-serif;transform:scaleX(0.9485);transform-origin:50% 0;-webkit-text-stroke:0.35px #8c8c8c;">Table</div><div style="position:absolute;left:-591.6px;width:2000px;text-align:center;top:201.68px;font-size:22px;line-height:22px;color:#ececec;font-weight:400;white-space:nowrap;font-family:'Liberation Sans', sans-serif;transform:scaleX(0.9586);transform-origin:50% 0;-webkit-text-stroke:0.35px #ececec;">From</div><div style="position:absolute;left:-591.4px;width:2000px;text-align:center;top:225.68px;font-size:22px;line-height:22px;color:#ececec;font-weight:400;white-space:nowrap;font-family:'Liberation Sans', sans-serif;transform:scaleX(1.018);transform-origin:50% 0;-webkit-text-stroke:0.35px #ececec;">Picture</div><div style="position:absolute;left:-454px;width:2000px;text-align:center;top:201.68px;font-size:22px;line-height:22px;color:#ececec;font-weight:400;white-space:nowrap;font-family:'Liberation Sans', sans-serif;transform:scaleX(1.013);transform-origin:50% 0;-webkit-text-stroke:0.35px #ececec;">Pictures</div><div style="position:absolute;left:-354px;width:2000px;text-align:center;top:201.68px;font-size:22px;line-height:22px;color:#ececec;font-weight:400;white-space:nowrap;font-family:'Liberation Sans', sans-serif;transform:scaleX(0.9757);transform-origin:50% 0;-webkit-text-stroke:0.35px #ececec;">Shapes</div><div style="position:absolute;left:-266px;width:2000px;text-align:center;top:201.68px;font-size:22px;line-height:22px;color:#ececec;font-weight:400;white-space:nowrap;font-family:'Liberation Sans', sans-serif;transform:scaleX(0.9927);transform-origin:50% 0;-webkit-text-stroke:0.35px #ececec;">Icons</div><div style="position:absolute;left:-36px;width:2000px;text-align:center;top:201.68px;font-size:22px;line-height:22px;color:#ececec;font-weight:400;white-space:nowrap;font-family:'Liberation Sans', sans-serif;transform:scaleX(0.9974);transform-origin:50% 0;-webkit-text-stroke:0.35px #ececec;">Recommended</div><div style="position:absolute;left:-36.5px;width:2000px;text-align:center;top:225.68px;font-size:22px;line-height:22px;color:#ececec;font-weight:400;white-space:nowrap;font-family:'Liberation Sans', sans-serif;transform:scaleX(1.0031);transform-origin:50% 0;-webkit-text-stroke:0.35px #ececec;">Charts</div><div style="position:absolute;left:315px;width:2000px;text-align:center;top:201.68px;font-size:22px;line-height:22px;color:#ececec;font-weight:400;white-space:nowrap;font-family:'Liberation Sans', sans-serif;transform:scaleX(0.9852);transform-origin:50% 0;-webkit-text-stroke:0.35px #ececec;">Maps</div><div style="position:absolute;left:403.70000000000005px;width:2000px;text-align:center;top:201.68px;font-size:22px;line-height:22px;color:#ececec;font-weight:400;white-space:nowrap;font-family:'Liberation Sans', sans-serif;transform:scaleX(1.01);transform-origin:50% 0;-webkit-text-stroke:0.35px #ececec;">Pivot</div><div style="position:absolute;left:403px;width:2000px;text-align:center;top:225.68px;font-size:22px;line-height:22px;color:#ececec;font-weight:400;white-space:nowrap;font-family:'Liberation Sans', sans-serif;transform:scaleX(1.0038);transform-origin:50% 0;-webkit-text-stroke:0.35px #ececec;">Chart</div><div style="position:absolute;left:538px;width:2000px;text-align:center;top:201.68px;font-size:22px;line-height:22px;color:#ececec;font-weight:400;white-space:nowrap;font-family:'Liberation Sans', sans-serif;transform:scaleX(1.0076);transform-origin:50% 0;-webkit-text-stroke:0.35px #ececec;">Sparklines</div><div style="position:absolute;left:1689.7px;top:145.38px;font-size:22px;line-height:22px;color:#ececec;font-weight:400;white-space:nowrap;font-family:'Liberation Sans', sans-serif;transform:scaleX(1.0016);transform-origin:0 0;-webkit-text-stroke:0.35px #ececec;">Slicer</div><div style="position:absolute;left:1690px;top:209.38px;font-size:22px;line-height:22px;color:#ececec;font-weight:400;white-space:nowrap;font-family:'Liberation Sans', sans-serif;transform:scaleX(0.9984);transform-origin:0 0;-webkit-text-stroke:0.35px #ececec;">Timeline</div><div style="position:absolute;left:862.5px;width:2000px;text-align:center;top:201.68px;font-size:22px;line-height:22px;color:#8c8c8c;font-weight:400;white-space:nowrap;font-family:'Liberation Sans', sans-serif;transform:scaleX(0.9837);transform-origin:50% 0;-webkit-text-stroke:0.35px #8c8c8c;">Link</div><div style="position:absolute;left:994.0999999999999px;width:2000px;text-align:center;top:201.68px;font-size:22px;line-height:22px;color:#ececec;font-weight:400;white-space:nowrap;font-family:'Liberation Sans', sans-serif;transform:scaleX(0.977);transform-origin:50% 0;-webkit-text-stroke:0.35px #ececec;">New</div><div style="position:absolute;left:994.5px;width:2000px;text-align:center;top:225.68px;font-size:22px;line-height:22px;color:#ececec;font-weight:400;white-space:nowrap;font-family:'Liberation Sans', sans-serif;transform:scaleX(1.0015);transform-origin:50% 0;-webkit-text-stroke:0.35px #ececec;">Comment</div><div style="position:absolute;left:1137px;width:2000px;text-align:center;top:201.68px;font-size:22px;line-height:22px;color:#ececec;font-weight:400;white-space:nowrap;font-family:'Liberation Sans', sans-serif;transform:scaleX(0.9349);transform-origin:50% 0;-webkit-text-stroke:0.35px #ececec;">Text</div><div style="position:absolute;left:1274.5px;width:2000px;text-align:center;top:201.68px;font-size:22px;line-height:22px;color:#ececec;font-weight:400;white-space:nowrap;font-family:'Liberation Sans', sans-serif;transform:scaleX(1.0076);transform-origin:50% 0;-webkit-text-stroke:0.35px #ececec;">Symbols</div><div style="position:absolute;left:8px;top:275.89px;font-size:26px;line-height:26px;color:#e8e8e8;font-weight:400;white-space:nowrap;font-family:'Liberation Sans', sans-serif;transform:scaleX(0.805);transform-origin:0 0;-webkit-text-stroke:0.3px #e8e8e8;">A1</div><div style="position:absolute;left:340px;top:122px;width:2px;height:124px;background:#4a4a4a"></div><div style="position:absolute;left:478px;top:122px;width:2px;height:124px;background:#4a4a4a"></div><div style="position:absolute;left:864px;top:122px;width:2px;height:124px;background:#4a4a4a"></div><div style="position:absolute;left:1460px;top:122px;width:2px;height:124px;background:#4a4a4a"></div><div style="position:absolute;left:1616px;top:122px;width:2px;height:124px;background:#4a4a4a"></div><div style="position:absolute;left:1806px;top:122px;width:2px;height:124px;background:#4a4a4a"></div><div style="position:absolute;left:1920px;top:122px;width:2px;height:124px;background:#4a4a4a"></div><div style="position:absolute;left:2068px;top:122px;width:2px;height:124px;background:#4a4a4a"></div><div style="position:absolute;left:2206px;top:122px;width:2px;height:124px;background:#4a4a4a"></div><svg style="position:absolute;left:0;top:0" width="2394" height="1552" viewBox="0 0 2394 1552"><circle cx="26" cy="22" r="12" fill="#ee6b60" stroke="none" stroke-width="0" /><circle cx="26" cy="22" r="4.3" fill="#8c1a10" stroke="none" stroke-width="0" /><circle cx="66" cy="22" r="12" fill="#f5bf4f" stroke="none" stroke-width="0" /><circle cx="106" cy="22" r="12" fill="#61c554" stroke="none" stroke-width="0" /><rect x="290" y="8" width="55" height="28" fill="#1b1b1b" stroke="#303030" stroke-width="1" rx="14" /><circle cx="304" cy="22" r="12" fill="#f7f7f7" stroke="none" stroke-width="0" /><path d="M386,7.4 L373.3,19.2 V33.6 Q373.3,35 374.8,35 H380.4 V27.4 Q380.4,25.3 382.6,25.3 H389.2 Q391.3,25.3 391.3,27.4 V35 H397.2 Q398.7,35 398.7,33.6 V19.2 Z" stroke="#f4f4f4" stroke-width="2.6" fill="none" stroke-linejoin="round"/><path d="M430,9.3 H447.5 L452.7,14.5 V32 Q452.7,34.7 450,34.7 H430 Q427.3,34.7 427.3,32 V12 Q427.3,9.3 430,9.3 Z" stroke="#f4f4f4" stroke-width="2.5" fill="none" stroke-linejoin="round"/><path d="M433,9.3 V15.5 Q433,17.3 434.8,17.3 H443 Q444.8,17.3 444.8,15.5 V9.3" stroke="#f4f4f4" stroke-width="2.5" fill="none" /><path d="M431.3,34.7 V25 Q431.3,23.3 433,23.3 H447 Q448.7,23.3 448.7,25 V34.7" stroke="#f4f4f4" stroke-width="2.5" fill="none" /><path d="M494,35.5 H484 Q481.3,35.5 481.3,33 V12 Q481.3,9.3 484,9.3 H501.5 L506.5,14.5 V20" stroke="#f4f4f4" stroke-width="2.5" fill="none" stroke-linejoin="round"/><path d="M487,9.3 V15.5 Q487,17.3 488.8,17.3 H497 Q498.8,17.3 498.8,15.5 V9.3" stroke="#f4f4f4" stroke-width="2.5" fill="none" /><path d="M485.3,35.5 V25 Q485.3,23.3 487,23.3 H496" stroke="#f4f4f4" stroke-width="2.5" fill="none" /><path d="M493.5,36 L508,23" stroke="#f4f4f4" stroke-width="5" fill="none" stroke-linecap="round"/><path d="M536.3,6.5 V17.8 H547.5" stroke="#f4f4f4" stroke-width="2.5" fill="none" stroke-linecap="round" stroke-linejoin="round"/><path d="M537.2,17 C541,11 545,6.8 550.3,6.8 C556.5,6.8 561,11.2 561,16.5 C561,20.3 558.5,23 555.5,26 L541.2,37" stroke="#f4f4f4" stroke-width="2.5" fill="none" stroke-linecap="round"/><path d="M581.5,20.0 L585.8,25.0 L590.0999999999999,20.0" stroke="#f4f4f4" stroke-width="3.2" fill="none" stroke-linecap="round" stroke-linejoin="round"/><path d="M640.2,15.8 A13,13 0 1 0 641.4,23.5" stroke="#7a7a7a" stroke-width="2.4" fill="none" /><path d="M640,8.5 V15.7 H632.5" stroke="#7a7a7a" stroke-width="2.4" fill="none" /><circle cx="671.9" cy="22" r="2.9" fill="#f4f4f4" stroke="none" stroke-width="0" /><circle cx="682.2" cy="22" r="2.9" fill="#f4f4f4" stroke="none" stroke-width="0" /><circle cx="692.3" cy="22" r="2.9" fill="#f4f4f4" stroke="none" stroke-width="0" /><path d="M1079.5,8 H1093 L1101,16 V34.5 Q1101,36 1099.5,36 H1079.5 Q1078,36 1078,34.5 V9.5 Q1078,8 1079.5,8 Z" stroke="none" stroke-width="0" fill="#f2f2f2" /><path d="M1093,8 V16 H1101 Z" stroke="none" stroke-width="0" fill="#c9c9c9" /><rect x="1081" y="12.0" width="10" height="1.3" fill="#c4c4c4" stroke="none" stroke-width="0" rx="0" /><rect x="1081" y="15.8" width="10" height="1.3" fill="#c4c4c4" stroke="none" stroke-width="0" rx="0" /><rect x="1081" y="19.6" width="16" height="1.3" fill="#c4c4c4" stroke="none" stroke-width="0" rx="0" /><rect x="1081" y="23.4" width="16" height="1.3" fill="#c4c4c4" stroke="none" stroke-width="0" rx="0" /><rect x="1081" y="27.2" width="16" height="1.3" fill="#c4c4c4" stroke="none" stroke-width="0" rx="0" /><rect x="1081" y="31.0" width="16" height="1.3" fill="#c4c4c4" stroke="none" stroke-width="0" rx="0" /><path d="M1299.7,18.25 L1306.0,25.75 L1312.3,18.25" stroke="#8a8a8a" stroke-width="2.6" fill="none" stroke-linecap="round" stroke-linejoin="round"/><circle cx="1778.4" cy="20.6" r="8.8" fill="none" stroke="#8f8f8f" stroke-width="2.5" /><path d="M1784.8,27 L1791.5,33.6" stroke="#8f8f8f" stroke-width="2.7" fill="none" stroke-linecap="round"/><circle cx="2351.5" cy="19.5" r="4.5" fill="none" stroke="#f4f4f4" stroke-width="2.3" /><path d="M2343.5,27.5 H2359 Q2360.5,27.5 2360.5,29 Q2360.5,36 2351.8,36 Q2343,36 2343,29 Q2343,27.5 2344.5,27.5 Z" stroke="#f4f4f4" stroke-width="2.3" fill="none" /><path d="M2360,7.3 H2371 Q2372.5,7.3 2372.5,8.8 V15.5 Q2372.5,17 2371,17 H2365 L2361,20.5 V17 Q2358.8,17 2358.8,15.5 V8.8 Q2358.8,7.3 2360,7.3 Z" stroke="#f4f4f4" stroke-width="2.1" fill="none" stroke-linejoin="round"/><path d="M2001.5,73.5 H2023 Q2027.3,73.5 2027.3,77.8 V91 Q2027.3,95.3 2023,95.3 H2012.5 L2005,101.5 V95.3 H2001.5 Q1997.2,95.3 1997.2,91 V77.8 Q1997.2,73.5 2001.5,73.5 Z" stroke="#f4f4f4" stroke-width="2.3" fill="none" stroke-linejoin="round"/><path d="M2237.5,75.5 H2229.5 Q2225.5,75.5 2225.5,79.5 V95 Q2225.5,99 2229.5,99 H2244.5 Q2248.5,99 2248.5,95 V91" stroke="#f4f4f4" stroke-width="2.3" fill="none" stroke-linecap="round"/><path d="M2231.2,91.3 Q2232.5,79.5 2244.8,79 V73.2 L2253.6,82.2 L2244.8,91 V85.8 Q2237,85.6 2231.2,91.3 Z" stroke="#f4f4f4" stroke-width="2.1" fill="none" stroke-linejoin="round"/><path d="M2349.7,83.25 L2356.0,90.75 L2362.3,83.25" stroke="#f4f4f4" stroke-width="2.3" fill="none" stroke-linecap="round" stroke-linejoin="round"/><rect x="17" y="133" width="54" height="54" fill="none" stroke="#6c6c6c" stroke-width="1.8" rx="0" /><rect x="22.8" y="138.7" width="10.5" height="10.5" fill="#3c3c3c" stroke="#6c6c6c" stroke-width="1.4" rx="0" /><rect x="38.6" y="138.7" width="26.8" height="10.5" fill="#3c3c3c" stroke="#6c6c6c" stroke-width="1.4" rx="0" /><rect x="22.8" y="154.7" width="10.5" height="26.6" fill="#3c3c3c" stroke="#6c6c6c" stroke-width="1.4" rx="0" /><path d="M40.5,175.2 H58.5 V155" stroke="#3b5d80" stroke-width="2.2" fill="none" /><path d="M47.5,168.6 L40.8,175.2 L47.5,181.8 M52,161.8 L58.5,155.2 L65,161.8" stroke="#3b5d80" stroke-width="2.2" fill="none" /><path d="M189.2,155.8 V133 H135.2 V187 H178.6" stroke="#6c6c6c" stroke-width="1.8" fill="none" /><rect x="140.7" y="138.7" width="10.5" height="10.5" fill="#3c3c3c" stroke="#6c6c6c" stroke-width="1.4" rx="0" /><rect x="156.6" y="138.7" width="26.8" height="10.5" fill="#3c3c3c" stroke="#6c6c6c" stroke-width="1.4" rx="0" /><rect x="140.7" y="154.7" width="10.5" height="26.6" fill="#3c3c3c" stroke="#6c6c6c" stroke-width="1.4" rx="0" /><path d="M175.3,168.5 C175.3,162.5 179,158.9 184.3,158.9 C189.8,158.9 193.2,162.5 193.2,167 C193.2,173.5 183,175.5 183,182 V185" stroke="#3b5d80" stroke-width="2.6" fill="none" /><rect x="181.3" y="187.3" width="3.4" height="3.4" fill="#3b5d80" stroke="none" stroke-width="0" rx="0" /><rect x="256.2" y="132.9" width="54" height="54.2" fill="none" stroke="#6c6c6c" stroke-width="1.8" rx="0" /><path d="M256.2,145 H310.2 M256.2,159.3 H310.2 M256.2,172.9 H310.2 M274,145 V187 M292.2,145 V187" stroke="#6c6c6c" stroke-width="1.6" fill="none" /><path d="M259.2,136.3 H270.8 L265,141.8 Z" stroke="none" stroke-width="0" fill="#3b5d80" /><path d="M277.2,136.3 H288.8 L283,141.8 Z" stroke="none" stroke-width="0" fill="#3b5d80" /><path d="M295.0,136.3 H306.6 L300.8,141.8 Z" stroke="none" stroke-width="0" fill="#3b5d80" /><path d="M424,165.5 V138.9 H370.1 V181 H390.8" stroke="#dcdcdc" stroke-width="2" fill="none" /><path d="M388,138.9 V181 M406,138.9 V162 M370.1,152.7 H424 M370.1,166.8 H390" stroke="#a9a9a9" stroke-width="1.8" fill="none" /><rect x="392" y="163" width="39" height="30" fill="#282828" stroke="none" stroke-width="0" rx="0" /><path d="M394.4,169.3 H401.5 L404.2,165.4 H417 L419.7,169.3 H428 V190.7 H394.4 Z" stroke="#5aa0e6" stroke-width="2.2" fill="none" stroke-linejoin="miter"/><circle cx="410.9" cy="180" r="6.8" fill="none" stroke="#5aa0e6" stroke-width="2.2" /><rect x="397.1" y="172.2" width="3.7" height="3.7" fill="#5aa0e6" stroke="none" stroke-width="0" rx="0" /><path d="M440.9,158.5 L445.2,163.5 L449.5,158.5" stroke="#f4f4f4" stroke-width="3.2" fill="none" stroke-linecap="round" stroke-linejoin="round"/><rect x="508" y="138.9" width="54" height="40.2" fill="none" stroke="#dcdcdc" stroke-width="2" rx="0" /><path d="M509,164.3 L522.9,149.4 L550.5,178.1 H509 Z" stroke="none" stroke-width="0" fill="#2a62ad" /><path d="M540.5,165.8 L547,159.3 L561,173.4 V178.1 H550.5 Z" stroke="none" stroke-width="0" fill="#2a62ad" /><path d="M509,164.3 L522.9,149.4 L550.5,178.1 M540.5,167.8 L547,161.3 L561,173.4" stroke="#86bcef" stroke-width="1.8" fill="none" /><circle cx="550.8" cy="149.6" r="5.3" fill="#eeae52" stroke="none" stroke-width="0" /><circle cx="554.3" cy="146.6" r="4.6" fill="#282828" stroke="none" stroke-width="0" /><path d="M578.5,158.5 L582.8,163.5 L587.0999999999999,158.5" stroke="#f4f4f4" stroke-width="3.2" fill="none" stroke-linecap="round" stroke-linejoin="round"/><rect x="607.8" y="132.8" width="36.5" height="36.3" fill="#2a62ad" stroke="#86bcef" stroke-width="1.5" rx="0" /><circle cx="642.8" cy="167.8" r="23" fill="#282828" stroke="none" stroke-width="0" /><circle cx="642.8" cy="167.8" r="19" fill="none" stroke="#dcdcdc" stroke-width="1.9" /><path d="M678.7,158.3 L683.0,163.3 L687.3,158.3" stroke="#f4f4f4" stroke-width="3.2" fill="none" stroke-linecap="round" stroke-linejoin="round"/><path d="M707.5,147 Q708,158 712,165 Q718,175.5 731,175.8 L740,176 Q746,162 744,154 L748.5,151.5 Q756,150 762,143 L753.5,142.5 Q752.5,130.8 741.5,130.8 Q730.5,130.8 730.5,142.5 Q730.5,148 733,151 Q722,155 707.5,147 Z" stroke="#86bcef" stroke-width="1.6" fill="#2a62ad" stroke-linejoin="round"/><path d="M727,185 Q722.5,168 736,159.8 Q746,154 760,155.6 Q762,170 754,180 Q745,190 727,185 Z" stroke="#282828" stroke-width="5" fill="#282828" /><path d="M727,185 Q722.5,168 736,159.8 Q746,154 760,155.6 Q762,170 754,180 Q745,190 727,185 Z" stroke="#dcdcdc" stroke-width="1.8" fill="none" /><path d="M744.7,169.3 Q731,176 721.5,191" stroke="#dcdcdc" stroke-width="1.8" fill="none" /><path d="M795.9,129.6 L808.7,136.4 V151.7 L795.9,158.3 L783.2,151.7 V136.4 Z" stroke="#3d82d6" stroke-width="2" fill="none" /><path d="M795.9,158 V143.5 L808.5,136.6 M783.5,136.5 L791,140.5 V143" stroke="#3d82d6" stroke-width="2" fill="none" /><path d="M826.7,142.0 L831.0,147.0 L835.3,142.0" stroke="#f4f4f4" stroke-width="3.2" fill="none" stroke-linecap="round" stroke-linejoin="round"/><path d="M781,175.8 H803 L810.2,186.5 H790.5 L786.5,191.6 H781 L785.8,183.5 Z" stroke="#a7dfa7" stroke-width="1.4" fill="#4a9a56" stroke-linejoin="round"/><rect x="794" y="186.8" width="18.2" height="12.2" fill="#282828" stroke="#dcdcdc" stroke-width="1.8" rx="0" /><path d="M797.5,191.2 H799 M801,191.2 H808.5 M797.5,195 H799 M801,195 H808.5" stroke="#bdbdbd" stroke-width="1.5" fill="none" /><path d="M826.7,186.4 L831.0,191.4 L835.3,186.4" stroke="#f4f4f4" stroke-width="3.2" fill="none" stroke-linecap="round" stroke-linejoin="round"/><path d="M785.5,232 V216.7 H808.5 V236" stroke="#a6a6a6" stroke-width="1.8" fill="none" stroke-dasharray="4.2,2.6"/><path d="M782,235.5 H786 L788.2,232.8 H794 L796.2,235.5 H800.2 V247.2 H782 Z" stroke="#dcdcdc" stroke-width="1.7" fill="#5c5c5c" /><circle cx="791.1" cy="241" r="3" fill="none" stroke="#dcdcdc" stroke-width="1.7" /><path d="M808.1,238.2 V247.8 M803.3,243 H812.9" stroke="#70d070" stroke-width="2.2" fill="none" /><path d="M826.7,230.1 L831.0,235.1 L835.3,230.1" stroke="#f4f4f4" stroke-width="3.2" fill="none" stroke-linecap="round" stroke-linejoin="round"/><rect x="923.8" y="132.4" width="17.4" height="55" fill="#5c5c5c" stroke="#a6a6a6" stroke-width="1.6" rx="0" /><rect x="941.2" y="153" width="13.2" height="35" fill="#282828" stroke="#dcdcdc" stroke-width="1.6" rx="0" /><path d="M960.8,145 C960.8,137.5 964.5,132.9 969.6,132.9 C975,132.9 978.5,136.8 978.5,142 C978.5,149 969,151.5 969,158.5 V160" stroke="#4a94de" stroke-width="2.6" fill="none" /><rect x="967.2" y="161.8" width="3.6" height="3.8" fill="#4a94de" stroke="none" stroke-width="0" rx="0" /><path d="M994.7,158.1 L999.0,163.1 L1003.3,158.1" stroke="#f4f4f4" stroke-width="3.2" fill="none" stroke-linecap="round" stroke-linejoin="round"/><rect x="1054.8" y="143.2" width="9.5" height="16.2" fill="#5c5c5c" stroke="#a6a6a6" stroke-width="1.5" rx="0" /><rect x="1064.3" y="128.7" width="11.4" height="30.7" fill="#282828" stroke="#dcdcdc" stroke-width="1.5" rx="0" /><rect x="1075.7" y="134.9" width="9.6" height="24.5" fill="#2a62ad" stroke="#86bcef" stroke-width="1.5" rx="0" /><path d="M1099.7,142.5 L1104.0,147.5 L1108.3,142.5" stroke="#f4f4f4" stroke-width="3.2" fill="none" stroke-linecap="round" stroke-linejoin="round"/><path d="M1055.9,183.8 L1060.1,172.1 L1072,189.7 L1084.1,172.1" stroke="#cfcfcf" stroke-width="1.6" fill="none" /><rect x="1054.1000000000001" y="182.0" width="3.6" height="3.6" fill="#cfcfcf" stroke="none" stroke-width="0" rx="0" /><rect x="1058.3" y="170.29999999999998" width="3.6" height="3.6" fill="#cfcfcf" stroke="none" stroke-width="0" rx="0" /><rect x="1070.2" y="187.89999999999998" width="3.6" height="3.6" fill="#cfcfcf" stroke="none" stroke-width="0" rx="0" /><rect x="1082.3" y="170.29999999999998" width="3.6" height="3.6" fill="#cfcfcf" stroke="none" stroke-width="0" rx="0" /><path d="M1055.9,193.8 L1073.8,167.6 L1084.1,183.8" stroke="#4a94de" stroke-width="1.8" fill="none" /><rect x="1054.1000000000001" y="192.0" width="3.6" height="3.6" fill="#4a94de" stroke="none" stroke-width="0" rx="0" /><rect x="1072.0" y="165.79999999999998" width="3.6" height="3.6" fill="#4a94de" stroke="none" stroke-width="0" rx="0" /><rect x="1082.3" y="182.0" width="3.6" height="3.6" fill="#4a94de" stroke="none" stroke-width="0" rx="0" /><path d="M1099.7,179.9 L1104.0,184.9 L1108.3,179.9" stroke="#f4f4f4" stroke-width="3.2" fill="none" stroke-linecap="round" stroke-linejoin="round"/><path d="M1071,220.5 V205 A15.5,15.5 0 1 1 1055.5,220.5 Z" stroke="#86bcef" stroke-width="1.6" fill="#2a62ad" /><path d="M1068.2,218 V203.2 A14.8,14.8 0 0 0 1053.4,218 Z" stroke="#a6a6a6" stroke-width="1.5" fill="#5c5c5c" /><path d="M1099.7,218.1 L1104.0,223.1 L1108.3,218.1" stroke="#f4f4f4" stroke-width="3.2" fill="none" stroke-linecap="round" stroke-linejoin="round"/><rect x="1126.8" y="128.7" width="14.7" height="30.8" fill="#5c5c5c" stroke="#a6a6a6" stroke-width="1.5" rx="0" /><rect x="1141.5" y="128.7" width="15.7" height="17.6" fill="#282828" stroke="#dcdcdc" stroke-width="1.5" rx="0" /><rect x="1141.5" y="146.3" width="15.7" height="13.2" fill="#2a62ad" stroke="#86bcef" stroke-width="1.5" rx="0" /><path d="M1171.7,142.4 L1176.0,147.4 L1180.3,142.4" stroke="#f4f4f4" stroke-width="3.2" fill="none" stroke-linecap="round" stroke-linejoin="round"/><rect x="1128.9" y="178.7" width="5.4" height="18.5" fill="#2a62ad" stroke="#86bcef" stroke-width="1.4" rx="0" /><rect x="1135.4" y="166.2" width="5.4" height="31.0" fill="#2a62ad" stroke="#86bcef" stroke-width="1.4" rx="0" /><rect x="1141.9" y="174.3" width="5.4" height="22.899999999999977" fill="#2a62ad" stroke="#86bcef" stroke-width="1.4" rx="0" /><rect x="1148.3" y="183.8" width="5.4" height="13.399999999999977" fill="#2a62ad" stroke="#86bcef" stroke-width="1.4" rx="0" /><path d="M1171.7,179.9 L1176.0,184.9 L1180.3,179.9" stroke="#f4f4f4" stroke-width="3.2" fill="none" stroke-linecap="round" stroke-linejoin="round"/><path d="M1127,204 V234.8 H1158" stroke="#dcdcdc" stroke-width="1.6" fill="none" /><rect x="1149.8" y="206.1" width="4" height="4" fill="#d8d8d8" stroke="none" stroke-width="0" rx="0" /><rect x="1132.1" y="225.6" width="4" height="4" fill="#d8d8d8" stroke="none" stroke-width="0" rx="0" /><rect x="1132.1" y="212" width="4" height="4" fill="#3b7ad0" stroke="none" stroke-width="0" rx="0" /><rect x="1140.2" y="217.9" width="4" height="4" fill="#3b7ad0" stroke="none" stroke-width="0" rx="0" /><rect x="1149.8" y="224.2" width="4" height="4" fill="#3b7ad0" stroke="none" stroke-width="0" rx="0" /><path d="M1171.7,218.1 L1176.0,223.1 L1180.3,218.1" stroke="#f4f4f4" stroke-width="3.2" fill="none" stroke-linecap="round" stroke-linejoin="round"/><rect x="1200.5" y="158.5" width="4.6" height="18.6" fill="#5c5c5c" stroke="#a6a6a6" stroke-width="1.4" rx="0" /><rect x="1208.3" y="146.8" width="4.9" height="12.4" fill="#5c5c5c" stroke="#a6a6a6" stroke-width="1.4" rx="0" /><rect x="1215.9" y="146.8" width="7.4" height="17.7" fill="#282828" stroke="#dcdcdc" stroke-width="1.4" rx="0" /><rect x="1226.3" y="164.5" width="5.2" height="12.6" fill="#2a62ad" stroke="#86bcef" stroke-width="1.4" rx="0" /><path d="M1205,159 H1208.5" stroke="#a6a6a6" stroke-width="1.4" fill="none" /><path d="M1247.7,160.0 L1252.0,165.0 L1256.3,160.0" stroke="#f4f4f4" stroke-width="3.2" fill="none" stroke-linecap="round" stroke-linejoin="round"/><rect x="1200.6" y="213" width="10" height="20.4" fill="#5c5c5c" stroke="#a6a6a6" stroke-width="1.5" rx="0" /><rect x="1210.6" y="220.4" width="11" height="13" fill="#282828" stroke="#dcdcdc" stroke-width="1.5" rx="0" /><rect x="1221.6" y="224.8" width="9.8" height="8.6" fill="#2a62ad" stroke="#86bcef" stroke-width="1.5" rx="0" /><path d="M1204.7,204.4 L1216.5,210 L1226.8,216.9" stroke="#d6d6d6" stroke-width="1.8" fill="none" /><rect x="1202.2" y="201.9" width="5" height="5" fill="#d6d6d6" stroke="none" stroke-width="0" rx="0" /><rect x="1214.0" y="207.5" width="5" height="5" fill="#d6d6d6" stroke="none" stroke-width="0" rx="0" /><rect x="1224.3" y="214.4" width="5" height="5" fill="#d6d6d6" stroke="none" stroke-width="0" rx="0" /><path d="M1247.7,216.6 L1252.0,221.6 L1256.3,216.6" stroke="#f4f4f4" stroke-width="3.2" fill="none" stroke-linecap="round" stroke-linejoin="round"/><circle cx="1305.9" cy="155.6" r="19.9" fill="none" stroke="#dcdcdc" stroke-width="1.9" /><path d="M1289,150 Q1290,144 1294,140 L1297,146 Q1294,152 1298,158 Q1300,162 1296,164 Q1292,166 1289,162 Q1287,156 1289,150 Z" stroke="none" stroke-width="0" fill="#a6daa6" /><path d="M1309,139 Q1318,138 1323,148 Q1323,156 1322,159 Q1315,152 1311,150 Q1307,145 1309,139 Z" stroke="none" stroke-width="0" fill="#a6daa6" /><path d="M1301,161 Q1309,159 1314,162 Q1313,170 1309,174 Q1305,173 1303,168 Q1300,165 1301,161 Z" stroke="none" stroke-width="0" fill="#a6daa6" /><path d="M1304,138 L1308,137.5 L1307,143 L1304,142 Z" stroke="none" stroke-width="0" fill="#a6daa6" /><path d="M1305.5,130.8 A25.2,25.2 0 1 0 1324.6,173.6" stroke="#dcdcdc" stroke-width="1.9" fill="none" /><path d="M1305.5,181 V187 M1288.2,187.3 H1322" stroke="#dcdcdc" stroke-width="1.9" fill="none" /><path d="M1347.7,158.2 L1352.0,163.2 L1356.3,158.2" stroke="#f4f4f4" stroke-width="3.2" fill="none" stroke-linecap="round" stroke-linejoin="round"/><path d="M1431,164 V133.2 H1377.2 V187 H1402" stroke="#dcdcdc" stroke-width="1.9" fill="none" /><rect x="1382.6" y="138.5" width="11" height="11" fill="#5c5c5c" stroke="#a6a6a6" stroke-width="1.5" rx="0" /><rect x="1398.5" y="138.5" width="27.3" height="11" fill="#5c5c5c" stroke="#a6a6a6" stroke-width="1.5" rx="0" /><rect x="1382.6" y="154.6" width="11" height="27.3" fill="#5c5c5c" stroke="#a6a6a6" stroke-width="1.5" rx="0" /><rect x="1403.3" y="173.2" width="12" height="19" fill="#282828" stroke="none" stroke-width="0" rx="0" /><rect x="1404.8" y="174.7" width="9.3" height="16.5" fill="#5c5c5c" stroke="#a6a6a6" stroke-width="1.5" rx="0" /><rect x="1413.6" y="160.2" width="12.2" height="31.2" fill="#282828" stroke="#dcdcdc" stroke-width="1.7" rx="0" /><rect x="1425.8" y="166.7" width="9.7" height="24.7" fill="#2a62ad" stroke="#86bcef" stroke-width="1.6" rx="0" /><path d="M1498,144.5 H1554 M1498,174.6 H1554 M1505.8,135.8 V183.8" stroke="#dcdcdc" stroke-width="1.8" fill="none" /><path d="M1505.8,160.5 L1512.5,168.5 L1522.6,153.5 L1532,168.5 L1546,151.5 L1554,160.8" stroke="#4a94de" stroke-width="2" fill="none" /><path d="M1569.7,157.9 L1574.0,162.9 L1578.3,157.9" stroke="#f4f4f4" stroke-width="3.2" fill="none" stroke-linecap="round" stroke-linejoin="round"/><path d="M1676.3,151.6 V140.8 H1645.5 V171.2 H1662.9" stroke="#dcdcdc" stroke-width="1.7" fill="none" /><rect x="1647.3" y="142.5" width="28.2" height="3.4" fill="#8a8a8a" stroke="none" stroke-width="0" rx="0" /><rect x="1651.5" y="150.8" width="9" height="7.2" fill="#2a62ad" stroke="#86bcef" stroke-width="1.3" rx="0" /><rect x="1651" y="150.2" width="19.8" height="1.8" fill="#86bcef" stroke="none" stroke-width="0" rx="0" /><path d="M1651.5,160.5 H1657 L1662.5,167.8 H1651.5 Z" stroke="#9a9a9a" stroke-width="1.3" fill="#5f5f5f" /><path d="M1659.3,154.2 H1676.6 L1671,162.9 V171.6 H1664.9 V162.9 Z" stroke="#dcdcdc" stroke-width="1.7" fill="#282828" stroke-linejoin="miter"/><path d="M1674.5,220.8 V211.8 H1647.4 V228.2 H1662.5" stroke="#dcdcdc" stroke-width="1.5" fill="none" /><rect x="1648.8" y="213" width="24.5" height="2.4" fill="#8a8a8a" stroke="none" stroke-width="0" rx="0" /><rect x="1650.6" y="220.3" width="4.8" height="4.4" fill="#7a7a7a" stroke="#a0a0a0" stroke-width="0.8" rx="0" /><rect x="1658.4" y="220.3" width="4.5" height="4.4" fill="#7a7a7a" stroke="#a0a0a0" stroke-width="0.8" rx="0" /><path d="M1662.6,221.6 H1676.7 L1671.2,228.6 V235.5 H1667.6 V228.6 Z" stroke="#dcdcdc" stroke-width="1.5" fill="#282828" stroke-linejoin="miter"/><path d="M1847.8,165.8 H1849.2 A12.6,12.6 0 0 1 1849.2,140.6 H1865.3 A12.6,12.6 0 0 1 1877.6,155.5 M1856.3,165.6 H1865.3 A12.6,12.6 0 0 0 1872,163.6" stroke="#6c6c6c" stroke-width="1.9" fill="none" /><path d="M1879.3,154 A12.9,12.9 0 0 1 1879.3,179.8 H1863.6 A12.9,12.9 0 0 1 1850.7,166.9 A12.9,12.9 0 0 1 1858,155.2" stroke="#6c6c6c" stroke-width="1.9" fill="none" /><path d="M1981,134.5 H2021.5 V171.2 H1986 L1972.6,184 V171.2 H1966.8 V147" stroke="#dcdcdc" stroke-width="1.8" fill="none" /><path d="M1977,128 V158.5 M1962,143.5 H1992.5" stroke="#82d982" stroke-width="2" fill="none" /><path d="M2104.5,165.5 L2146.5,134.2 L2139.5,187 M2119.5,157.3 L2141.5,168.2" stroke="#4a94de" stroke-width="4.2" fill="none" stroke-linejoin="miter"/><path d="M2169.7,157.7 L2174.0,162.7 L2178.3,157.7" stroke="#f4f4f4" stroke-width="3.2" fill="none" stroke-linecap="round" stroke-linejoin="round"/><path d="M2240.5,182.8 H2254 Q2241,173 2241,156 Q2241,137 2263,137 Q2285,137 2285,156 Q2285,173 2272,182.8 H2285.5" stroke="#dcdcdc" stroke-width="2.4" fill="none" /><path d="M2307.7,157.5 L2312.0,162.5 L2316.3,157.5" stroke="#f4f4f4" stroke-width="3.2" fill="none" stroke-linecap="round" stroke-linejoin="round"/><path d="M133.6,284.7 L141,272.7 L148.3,284.7 Z" stroke="none" stroke-width="0" fill="#bdbdbd" /><path d="M133.6,296.6 L141,309.2 L148.3,296.6 Z" stroke="none" stroke-width="0" fill="#bdbdbd" /><path d="M189.5,282 L208,300 M208,282 L189.5,300" stroke="#575757" stroke-width="3.6" fill="none" /><path d="M245,291.5 L253,299.5 L271,283" stroke="#575757" stroke-width="3.6" fill="none" /><text x="302" y="302" font-family="Liberation Serif" font-style="italic" font-size="33" fill="#9c9c9c">fx</text><path d="M2375,284.5 H2390 L2382.5,297 Z" stroke="none" stroke-width="0" fill="#c8c8c8" /><path d="M0,360 L28,330.5 V360 Z" stroke="none" stroke-width="0" fill="#575757" /><rect x="52" y="598" width="26" height="16" fill="#5b84b8" stroke="none" stroke-width="0" rx="0" /><rect x="80" y="598" width="98" height="16" fill="#5b84b8" stroke="none" stroke-width="0" rx="0" /><rect x="52" y="616" width="26" height="88" fill="#5b84b8" stroke="none" stroke-width="0" rx="0" /><rect x="80" y="616" width="98" height="88" fill="#c5d3e5" stroke="none" stroke-width="0" rx="0" /><rect x="58" y="603" width="14" height="4" fill="#fff" stroke="none" stroke-width="0" rx="0" /><rect x="86" y="603" width="14" height="4" fill="#fff" stroke="none" stroke-width="0" rx="0" /><rect x="110" y="603" width="14" height="4" fill="#fff" stroke="none" stroke-width="0" rx="0" /><rect x="134" y="603" width="14" height="4" fill="#fff" stroke="none" stroke-width="0" rx="0" /><rect x="158" y="603" width="14" height="4" fill="#fff" stroke="none" stroke-width="0" rx="0" /><rect x="58" y="622.0" width="14" height="4" fill="#fff" stroke="none" stroke-width="0" rx="0" /><rect x="86" y="622.0" width="14" height="4" fill="#8a8a8a" stroke="none" stroke-width="0" rx="0" /><rect x="110" y="622.0" width="14" height="4" fill="#8a8a8a" stroke="none" stroke-width="0" rx="0" /><rect x="134" y="622.0" width="14" height="4" fill="#8a8a8a" stroke="none" stroke-width="0" rx="0" /><rect x="158" y="622.0" width="14" height="4" fill="#8a8a8a" stroke="none" stroke-width="0" rx="0" /><rect x="58" y="633.9" width="14" height="4" fill="#fff" stroke="none" stroke-width="0" rx="0" /><rect x="86" y="633.9" width="14" height="4" fill="#8a8a8a" stroke="none" stroke-width="0" rx="0" /><rect x="110" y="633.9" width="14" height="4" fill="#8a8a8a" stroke="none" stroke-width="0" rx="0" /><rect x="134" y="633.9" width="14" height="4" fill="#8a8a8a" stroke="none" stroke-width="0" rx="0" /><rect x="158" y="633.9" width="14" height="4" fill="#8a8a8a" stroke="none" stroke-width="0" rx="0" /><rect x="58" y="645.8" width="14" height="4" fill="#fff" stroke="none" stroke-width="0" rx="0" /><rect x="86" y="645.8" width="14" height="4" fill="#8a8a8a" stroke="none" stroke-width="0" rx="0" /><rect x="110" y="645.8" width="14" height="4" fill="#8a8a8a" stroke="none" stroke-width="0" rx="0" /><rect x="134" y="645.8" width="14" height="4" fill="#8a8a8a" stroke="none" stroke-width="0" rx="0" /><rect x="158" y="645.8" width="14" height="4" fill="#8a8a8a" stroke="none" stroke-width="0" rx="0" /><rect x="58" y="657.7" width="14" height="4" fill="#fff" stroke="none" stroke-width="0" rx="0" /><rect x="86" y="657.7" width="14" height="4" fill="#8a8a8a" stroke="none" stroke-width="0" rx="0" /><rect x="110" y="657.7" width="14" height="4" fill="#8a8a8a" stroke="none" stroke-width="0" rx="0" /><rect x="134" y="657.7" width="14" height="4" fill="#8a8a8a" stroke="none" stroke-width="0" rx="0" /><rect x="158" y="657.7" width="14" height="4" fill="#8a8a8a" stroke="none" stroke-width="0" rx="0" /><rect x="58" y="669.6" width="14" height="4" fill="#fff" stroke="none" stroke-width="0" rx="0" /><rect x="86" y="669.6" width="14" height="4" fill="#8a8a8a" stroke="none" stroke-width="0" rx="0" /><rect x="110" y="669.6" width="14" height="4" fill="#8a8a8a" stroke="none" stroke-width="0" rx="0" /><rect x="134" y="669.6" width="14" height="4" fill="#8a8a8a" stroke="none" stroke-width="0" rx="0" /><rect x="158" y="669.6" width="14" height="4" fill="#8a8a8a" stroke="none" stroke-width="0" rx="0" /><rect x="58" y="681.5" width="14" height="4" fill="#fff" stroke="none" stroke-width="0" rx="0" /><rect x="86" y="681.5" width="14" height="4" fill="#8a8a8a" stroke="none" stroke-width="0" rx="0" /><rect x="110" y="681.5" width="14" height="4" fill="#8a8a8a" stroke="none" stroke-width="0" rx="0" /><rect x="134" y="681.5" width="14" height="4" fill="#8a8a8a" stroke="none" stroke-width="0" rx="0" /><rect x="158" y="681.5" width="14" height="4" fill="#8a8a8a" stroke="none" stroke-width="0" rx="0" /><rect x="58" y="693.4" width="14" height="4" fill="#fff" stroke="none" stroke-width="0" rx="0" /><rect x="86" y="693.4" width="14" height="4" fill="#8a8a8a" stroke="none" stroke-width="0" rx="0" /><rect x="110" y="693.4" width="14" height="4" fill="#8a8a8a" stroke="none" stroke-width="0" rx="0" /><rect x="134" y="693.4" width="14" height="4" fill="#8a8a8a" stroke="none" stroke-width="0" rx="0" /><rect x="158" y="693.4" width="14" height="4" fill="#8a8a8a" stroke="none" stroke-width="0" rx="0" /><rect x="260" y="598" width="138" height="302" fill="#c5d3e5" stroke="none" stroke-width="0" rx="0" /><rect x="274" y="614" width="82" height="5" fill="#5b84b8" stroke="none" stroke-width="0" rx="0" /><rect x="273" y="633" width="113" height="107" fill="#fff" stroke="#9bb4d4" stroke-width="1.2" rx="0" /><rect x="290" y="646.0" width="84" height="3.5" fill="#b4b4b4" stroke="none" stroke-width="0" rx="0" /><rect x="290" y="656.1" width="84" height="3.5" fill="#b4b4b4" stroke="none" stroke-width="0" rx="0" /><rect x="290" y="666.2" width="84" height="3.5" fill="#b4b4b4" stroke="none" stroke-width="0" rx="0" /><rect x="290" y="676.3" width="84" height="3.5" fill="#b4b4b4" stroke="none" stroke-width="0" rx="0" /><rect x="290" y="686.4" width="84" height="3.5" fill="#b4b4b4" stroke="none" stroke-width="0" rx="0" /><rect x="290" y="696.5" width="84" height="3.5" fill="#b4b4b4" stroke="none" stroke-width="0" rx="0" /><rect x="290" y="706.6" width="84" height="3.5" fill="#b4b4b4" stroke="none" stroke-width="0" rx="0" /><rect x="290" y="716.7" width="84" height="3.5" fill="#b4b4b4" stroke="none" stroke-width="0" rx="0" /><rect x="290" y="726.8" width="84" height="3.5" fill="#b4b4b4" stroke="none" stroke-width="0" rx="0" /><rect x="280" y="646" width="3.5" height="3.5" fill="#b4b4b4" stroke="none" stroke-width="0" rx="0" /><rect x="280" y="656" width="3.5" height="3.5" fill="#b4b4b4" stroke="none" stroke-width="0" rx="0" /><rect x="274" y="753" width="82" height="5" fill="#5b84b8" stroke="none" stroke-width="0" rx="0" /><rect x="273" y="773" width="50" height="45" fill="#fff" stroke="#9bb4d4" stroke-width="1.2" rx="0" /><rect x="335" y="773" width="50" height="45" fill="#fff" stroke="#9bb4d4" stroke-width="1.2" rx="0" /><rect x="273" y="831" width="50" height="45" fill="#fff" stroke="#9bb4d4" stroke-width="1.2" rx="0" /><rect x="335" y="831" width="50" height="45" fill="#fff" stroke="#9bb4d4" stroke-width="1.2" rx="0" /><defs><clipPath id="mg"><circle cx="251.5" cy="719.5" r="62"/></clipPath></defs><circle cx="251.5" cy="719.5" r="63" fill="#fff" stroke="#cfdcec" stroke-width="1.5" /><g clip-path="url(#mg)"><rect x="219.5" y="673" width="24" height="24" fill="#fff" stroke="#7a7a7a" stroke-width="2" rx="0" /><rect x="250" y="680" width="64" height="11" fill="#b4b4b4" stroke="none" stroke-width="0" rx="0" /><rect x="219.5" y="706.5" width="24" height="24" fill="#fff" stroke="#7a7a7a" stroke-width="2" rx="0" /><rect x="250" y="714" width="64" height="11" fill="#b4b4b4" stroke="none" stroke-width="0" rx="0" /><rect x="219.5" y="740.5" width="24" height="24" fill="#fff" stroke="#7a7a7a" stroke-width="2" rx="0" /><rect x="250" y="748" width="64" height="11" fill="#b4b4b4" stroke="none" stroke-width="0" rx="0" /></g><path d="M223.5,718 L229,724.5 L239,712" stroke="#d05a3a" stroke-width="3.2" fill="none" /><circle cx="2351.7" cy="348.8" r="14.2" fill="#8a8a8a" stroke="none" stroke-width="0" /><path d="M2345.5,342.6 L2357.9,355 M2357.9,342.6 L2345.5,355" stroke="#2e2e2e" stroke-width="2.6" fill="none" /><circle cx="2130.5" cy="432.5" r="7" fill="none" stroke="#bdbdbd" stroke-width="2.2" /><path d="M2135.5,437.5 L2142.5,444.5" stroke="#bdbdbd" stroke-width="2.5" fill="none" stroke-linecap="round"/><circle cx="2098" cy="694" r="6.2" fill="#454545" stroke="none" stroke-width="0" /><path d="M1818.5,727 Q1818.5,723.5 1831.8,723.5 Q1845,723.5 1845,727 Q1845,730 1836,736 V748.5 Q1836,750.5 1831.8,750.5 Q1827.5,750.5 1827.5,748.5 V736 Q1818.5,730 1818.5,727 Z" stroke="none" stroke-width="0" fill="#a9a9a9" /><ellipse cx="1831.8" cy="727.2" rx="9.5" ry="2.2" fill="#333"/><rect x="2123.5" y="726.7" width="7.5" height="20.6" fill="#a9a9a9" stroke="none" stroke-width="0" rx="0" /><rect x="2133" y="726.7" width="7.5" height="20.6" fill="#a9a9a9" stroke="none" stroke-width="0" rx="0" /><rect x="2142.6" y="726.7" width="7.5" height="20.6" fill="#a9a9a9" stroke="none" stroke-width="0" rx="0" /><rect x="1821.5" y="1094.5" width="20.5" height="6.5" fill="#a9a9a9" stroke="none" stroke-width="0" rx="0" /><rect x="1821.5" y="1103.5" width="20.5" height="6.5" fill="#a9a9a9" stroke="none" stroke-width="0" rx="0" /><rect x="1821.5" y="1112.5" width="20.5" height="6.5" fill="#a9a9a9" stroke="none" stroke-width="0" rx="0" /><path d="M2150,1098 V1093.5 H2124 L2136,1107.8 L2124,1121.5 H2150 V1117" stroke="#a9a9a9" stroke-width="2.8" fill="none" /><path d="M32,1477.8 V1498.2 L17.6,1488 Z" stroke="none" stroke-width="0" fill="#6a6a6a" /><path d="M64,1477.8 V1498.2 L78.2,1488 Z" stroke="none" stroke-width="0" fill="#6a6a6a" /><path d="M556,1477 V1495.5 M546.5,1486.2 H565.5" stroke="#c8c8c8" stroke-width="3.6" fill="none" /><circle cx="158.9" cy="1525.1" r="3.4" fill="none" stroke="#f4f4f4" stroke-width="2" /><path d="M163.3,1532.6 Q165.8,1530.2 169.5,1529.6 Q172.4,1528.9 171.6,1526.6 Q170.6,1524.6 167.2,1525.9 Q162.3,1528.4 158.9,1528.4 Q155.5,1528.4 150.6,1525.9 Q147.2,1524.6 146.3,1527 Q145.8,1529.3 149,1530.5 L152.3,1531.7 Q153.5,1532.2 153.5,1533.6 V1539.3 L151,1546 Q150.4,1548.2 152.4,1548.4 Q153.9,1548.5 154.8,1546.8 L158.9,1539.6 L163.8,1548.3" stroke="#f4f4f4" stroke-width="1.9" fill="none" stroke-linejoin="round" stroke-linecap="round"/><path d="M166,1537.2 Q166.8,1534.2 170.6,1534.2 Q175.3,1534.2 175.3,1537.8 Q175.3,1540.6 171.4,1542.3 Q170.5,1542.8 170.5,1544.6" stroke="#f4f4f4" stroke-width="2" fill="none" stroke-linecap="round"/><rect x="169.3" y="1547.4" width="2.6" height="2.4" fill="#f4f4f4" stroke="none" stroke-width="0" rx="0" /><rect x="1785" y="1523.4" width="24" height="23.3" fill="none" stroke="#f4f4f4" stroke-width="2" rx="0" /><path d="M1793,1523.4 V1546.7 M1801,1523.4 V1546.7 M1785,1531.2 H1809 M1785,1539 H1809" stroke="#f4f4f4" stroke-width="1.8" fill="none" /><rect x="1856" y="1523.4" width="26" height="23.3" fill="none" stroke="#f4f4f4" stroke-width="2" rx="0" /><path d="M1861.5,1528.5 H1876.5 V1541.5 H1861.5 Z M1864.5,1532.5 H1873.5 M1864.5,1535.5 H1873.5 M1864.5,1538.5 H1873.5" stroke="#f4f4f4" stroke-width="1.6" fill="none" /><rect x="1927" y="1523.4" width="26" height="23.3" fill="none" stroke="#f4f4f4" stroke-width="2" rx="0" /><path d="M1934,1523.4 V1535.5 H1945.5 V1523.4 M1940,1523.4 V1535.5" stroke="#f4f4f4" stroke-width="1.8" fill="none" /><path d="M1991.5,1535 H2008" stroke="#f4f4f4" stroke-width="3.6" fill="none" /><rect x="2022" y="1531" width="200" height="9" fill="#7b7b7b" stroke="none" stroke-width="0" rx="4.5" /><circle cx="2122" cy="1535" r="16" fill="#a3a3a3" stroke="none" stroke-width="0" /><path d="M2236,1535 H2252.5 M2244.25,1526.75 V1543.25" stroke="#f4f4f4" stroke-width="3.6" fill="none" /></svg>
</div></body></html>
